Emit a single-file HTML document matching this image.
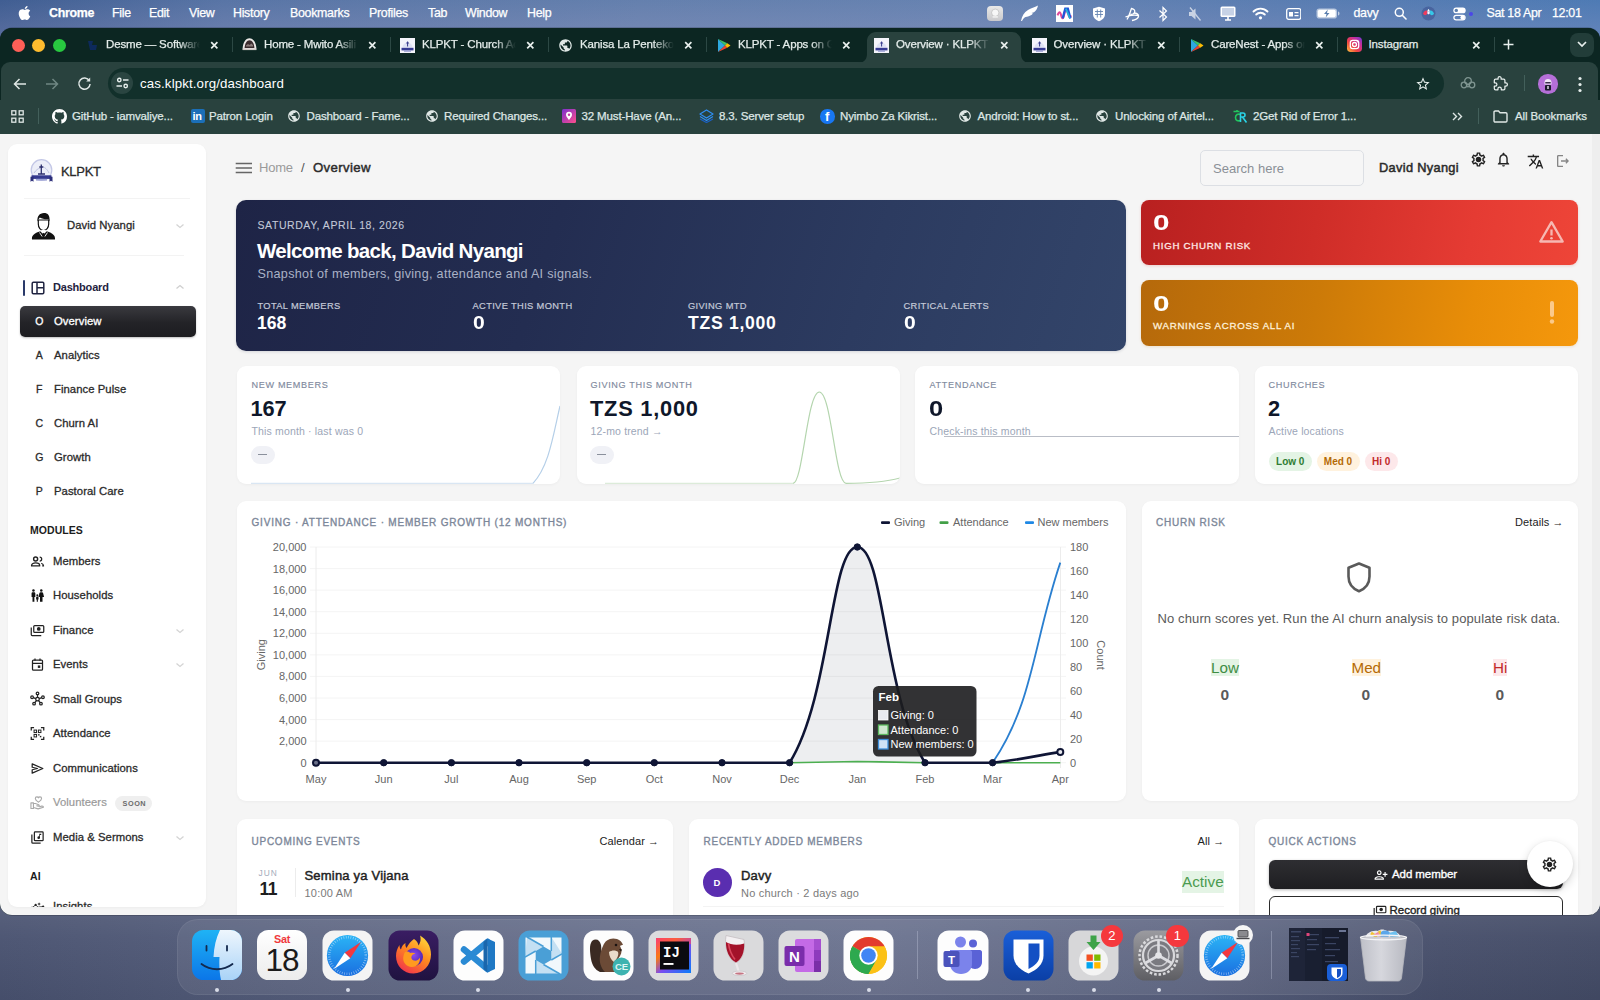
<!DOCTYPE html>
<html lang="en">
<head>
<meta charset="utf-8">
<title>Overview · KLPKT</title>
<style>
*{box-sizing:border-box;margin:0;padding:0}
html,body{width:1600px;height:1000px;overflow:hidden}
body{font-family:"Liberation Sans",sans-serif;background:#474f6b;position:relative;color:#222;-webkit-font-smoothing:antialiased}
.abs{position:absolute}
.t{position:absolute;white-space:nowrap;line-height:1}
/* desktop */
#desk{position:absolute;left:0;top:0;width:1600px;height:1000px;background:linear-gradient(90deg,#495270 0%,#545d7b 18%,#5f6785 40%,#626a88 55%,#575f7d 75%,#474f6b 90%,#434b66 100%)}
#menubar{position:absolute;left:0;top:0;width:1600px;height:42px;background:linear-gradient(90deg,#3d5b8e 0%,#5a76a5 14%,#6883ae 40%,#6a86b2 60%,#5c80b3 80%,#4e7db6 100%)}
#menubar:after{content:"";position:absolute;left:0;top:0;right:0;bottom:0;background:linear-gradient(180deg,rgba(80,110,170,.15) 0%,rgba(150,150,195,.35) 100%)}
#menubar .t{color:#fff;font-size:12.4px;top:7px;z-index:2;letter-spacing:-.3px;-webkit-text-stroke:.25px #fff}
/* chrome window */
#win{position:absolute;left:.4px;top:27.5px;width:1599.2px;height:887px;border-radius:12px;overflow:hidden;background:#0c2622;box-shadow:0 0 0 .5px rgba(0,0,0,.35)}
#g{position:absolute;left:-.4px;top:-27.5px;width:1600px;height:1000px}
#tabstrip{position:absolute;left:0;top:27px;width:1600px;height:35px;background:#0c2622}
#toolbar{position:absolute;left:1px;top:62px;width:1596.5px;height:39px;background:#29423e;border-radius:9px 9px 0 0}
#bmbar{position:absolute;left:0;top:100px;width:1600px;height:34.5px;background:#29423e}
#page{position:absolute;left:0;top:134px;width:1600px;height:781px;background:#f5f5f5;overflow:hidden}
#pg{position:absolute;left:0;top:-134px;width:1600px;height:1000px}
.tabt{position:absolute;top:11.5px;font-size:11.5px;color:#e4ecea;white-space:nowrap;line-height:13px;height:14px;overflow:hidden;letter-spacing:-.15px;-webkit-text-stroke:.25px #e4ecea}
.tabx{position:absolute;top:12px;width:10px;height:10px}
.tsep{position:absolute;top:11px;width:1px;height:14px;background:#2c4844}
.bmt{position:absolute;top:9.5px;font-size:11.5px;color:#dfe7e5;white-space:nowrap;line-height:1;letter-spacing:-.13px;-webkit-text-stroke:.25px #dfe7e5}
/* dock */
#dock{position:absolute;left:177px;top:918.5px;width:1246px;height:76px;border-radius:21px;background:rgba(255,255,255,.07);border:1px solid rgba(255,255,255,.07)}
.di{position:absolute;top:931px;width:51px;height:51px;border-radius:12px;overflow:hidden}
.dot{position:absolute;top:988px;width:4px;height:4px;border-radius:2px;background:#d8dce8}
</style>
</head>
<body>
<div id="desk"></div>
<div class="abs" style="left:0;top:905px;width:1600px;height:95px;background:linear-gradient(180deg,rgba(255,255,255,.09) 0%,rgba(255,255,255,.03) 35%,rgba(0,0,0,.05) 100%)"></div>
<div id="menubar">
<svg class="abs" style="left:17px;top:5px;z-index:2" width="14" height="16" viewBox="0 0 14 16"><path fill="#fff" d="M11.6 8.5c0-1.9 1.5-2.8 1.6-2.8-.9-1.300-2.200-1.500-2.700-1.500-1.100-.1-2.200.7-2.800.7-.6 0-1.500-.7-2.400-.6C4 4.300 2.900 5 2.300 6 1 8.200 2 11.400 3.200 13.200c.6.900 1.300 1.800 2.200 1.800.9 0 1.200-.6 2.300-.6 1.100 0 1.400.6 2.300.6 1 0 1.600-.9 2.200-1.700.7-1 1-2 1-2-.1-.1-1.600-.7-1.600-2.800zM9.800 3.100c.5-.6.800-1.400.7-2.200-.7 0-1.500.5-2 1.100-.4.500-.8 1.300-.7 2.100.8 0 1.500-.4 2-1z"/></svg>
<span class="t" style="left:49px;font-weight:bold">Chrome</span>
<span class="t" style="left:112px">File</span>
<span class="t" style="left:149px">Edit</span>
<span class="t" style="left:189px">View</span>
<span class="t" style="left:233px">History</span>
<span class="t" style="left:290px">Bookmarks</span>
<span class="t" style="left:369px">Profiles</span>
<span class="t" style="left:428px">Tab</span>
<span class="t" style="left:465px">Window</span>
<span class="t" style="left:527px">Help</span>
<!--MENURIGHT-START-->
<div class="abs" style="left:987px;top:5.500px;width:15.500px;height:15.500px;border-radius:4px;background:linear-gradient(180deg,#e9e9e9,#c9c9cc);z-index:2"></div>
<svg class="abs" style="left:989.500px;top:8px;z-index:2" width="10.500" height="10.500" viewBox="0 0 10 10"><circle cx="5" cy="4.500" r="3.500" fill="#f7f7f7" stroke="#b5b5b5" stroke-width=".6"/><path d="M2.500 8.500h5" stroke="#f7f7f7" stroke-width="1.200"/></svg>
<svg class="abs" style="left:1020px;top:5px;z-index:2" width="19" height="17" viewBox="0 0 19 17"><path d="M1 16C2 11 4 7.500 8 5c3-1.800 6.500-2.800 10-4.500-.5 3-2 5.300-4 6.800l-2.500.7 1.500.6c-1.500 1.700-3.500 2.800-6 3.200-2 .3-3.500 1-5 4.200z" fill="#fff"/></svg>
<div class="abs" style="left:1056px;top:5px;width:16.500px;height:16.500px;background:#fff;z-index:2"></div>
<svg class="abs" style="left:1056px;top:5px;z-index:2" width="16.500" height="16.500" viewBox="0 0 16 16"><path d="M1.500 10c1.500-4 2.500-4 3.500 0s2 4 3-1 2-6 3.500-1 2 5 3 2" fill="none" stroke="#e0489a" stroke-width="2"/><path d="M6.500 13L9 3.500l2.500 0L14 13" fill="none" stroke="#2255d8" stroke-width="2.200"/><path d="M9.500 3.500c1.500 3 2.500 6 4 9.500" stroke="#1fb6d9" stroke-width="1.600" fill="none"/></svg>
<svg class="abs" style="left:1091.500px;top:5.500px;z-index:2" width="14" height="16" viewBox="0 0 14 16"><path d="M7 .8l6 1.700v5.500c0 3.500-2.500 6-6 7.200C3.500 14 1 11.500 1 8V2.500z" fill="#fff"/><path d="M3 5.500h8M3 8.500h8M5.300 3.500v8M8.700 3.500v8" stroke="#6786b2" stroke-width=".9"/></svg>
<svg class="abs" style="left:1124px;top:5.500px;z-index:2" width="17" height="16" viewBox="0 0 17 16"><g fill="none" stroke="#fff" stroke-width="1.300"><path d="M3 13.500c2-3 3-7 4.500-11 2.500.5 4 2 3 4s-3.500 2-5 1.500"/><path d="M1.500 11c3-1.500 8-2.500 13.500-1.500M10 7c3 0 5 1.500 4.500 3.500S11 14 8 14.500"/></g></svg>
<svg class="abs" style="left:1158px;top:5.500px;z-index:2" width="10" height="16" viewBox="0 0 10 16"><path d="M1.500 4.500l7 6.500L5 14.500V1.500L8.500 5l-7 6.500" fill="none" stroke="#fff" stroke-width="1.200"/></svg>
<svg class="abs" style="left:1187px;top:5.500px;z-index:2" width="16" height="16" viewBox="0 0 16 16"><path d="M2 6h2.500L8.500 2.500v11L4.500 10H2z" fill="#c9d3e4"/><path d="M3 1.500l10.500 13" stroke="#c9d3e4" stroke-width="1.300"/></svg>
<svg class="abs" style="left:1219.500px;top:6px;z-index:2" width="16" height="15" viewBox="0 0 16 15"><rect x=".5" y=".5" width="15" height="10.500" rx="1.500" fill="#fff"/><rect x="2" y="2" width="12" height="7.500" fill="#c7d2e6"/><path d="M5 14h6M8 11v3" stroke="#fff" stroke-width="1.600"/></svg>
<svg class="abs" style="left:1251.500px;top:6.500px;z-index:2" width="17" height="13" viewBox="0 0 17 13"><g fill="none" stroke="#fff" stroke-width="1.900" stroke-linecap="round"><path d="M1.500 4.500a10 10 0 0 1 14 0"/><path d="M4.200 7.500a6 6 0 0 1 8.600 0"/></g><circle cx="8.500" cy="10.800" r="1.600" fill="#fff"/></svg>
<svg class="abs" style="left:1285.500px;top:7.500px;z-index:2" width="15.500" height="12" viewBox="0 0 15.500 12"><rect x=".7" y=".7" width="14.100" height="10.600" rx="2" fill="none" stroke="#fff" stroke-width="1.300"/><rect x="3" y="4" width="4" height="4.500" fill="#fff"/><path d="M8.500 4.700h4M8.500 7.700h4" stroke="#fff" stroke-width="1.200"/></svg>
<svg class="abs" style="left:1315.500px;top:8px;z-index:2" width="24" height="11" viewBox="0 0 24 11"><rect x=".5" y=".5" width="20.500" height="10" rx="2.800" fill="#fff" fill-opacity=".55"/><rect x="1.800" y="1.800" width="17.900" height="7.400" rx="1.700" fill="#fff"/><path d="M22 3.500c1 .3 1.500 1 1.500 2s-.5 1.700-1.500 2z" fill="#fff" fill-opacity=".6"/><path d="M11.800 1.500L8 6h2.500l-.8 3.500L13.500 5H11z" fill="#5b7fae"/></svg>
<span class="t" style="left:1353.500px">davy</span>
<svg class="abs" style="left:1394px;top:6.500px;z-index:2" width="13" height="13" viewBox="0 0 13 13"><circle cx="5.300" cy="5.300" r="4" fill="none" stroke="#fff" stroke-width="1.500"/><path d="M8.300 8.300l3.700 3.700" stroke="#fff" stroke-width="1.600" stroke-linecap="round"/></svg>
<svg class="abs" style="left:1420.500px;top:6px;z-index:2" width="15" height="15" viewBox="0 0 15 15"><defs><radialGradient id="si" cx=".5" cy=".5" r=".5"><stop offset="0" stop-color="#fff"/><stop offset=".35" stop-color="#f7f2ff"/><stop offset="1" stop-color="#4f66b0" stop-opacity=".2"/></radialGradient></defs><circle cx="7.500" cy="7.500" r="7" fill="#3b4f8c" fill-opacity=".55"/><path d="M2 7.500C3.500 4 6 3.500 7.500 6 6 9 3.500 10.500 2 7.500z" fill="#ef3b5d"/><path d="M13 7.500C11.500 4 9 3.500 7.500 6 9 9 11.500 10.500 13 7.500z" fill="#35c8e8"/><path d="M7.500 3c1.500 1 1.500 3.500 0 5.500-1.500-2-1.500-4.500 0-5.500z" fill="#fff"/><circle cx="7.500" cy="7" r="2" fill="url(#si)"/></svg>
<svg class="abs" style="left:1453px;top:6.500px;z-index:2" width="13" height="14" viewBox="0 0 13 14"><rect x=".3" y=".5" width="12.400" height="5.800" rx="2.900" fill="#fff"/><circle cx="3.300" cy="3.400" r="1.700" fill="#5b7fae"/><rect x=".9" y="8.300" width="11.200" height="4.600" rx="2.300" fill="none" stroke="#fff" stroke-width="1.200"/><circle cx="9.600" cy="10.600" r="2.200" fill="#fff"/></svg>
<div class="abs" style="left:1469px;top:11.500px;width:4px;height:4px;border-radius:50%;background:#4b46e8;z-index:2"></div>
<span class="t" style="left:1486.500px">Sat 18 Apr</span>
<span class="t" style="left:1552px">12:01</span>
<!--MENURIGHT-END-->
</div>
<div id="win"><div id="g">
<div id="tabstrip">
<!--TABS-->
</div>
<div id="toolbar">
<!--TOOLBAR-->
</div>
<div id="bmbar">
<!--BOOKMARKS-->
</div>
<!--CHROME-START-->
<!-- traffic lights -->
<div class="abs" style="left:11.500px;top:38.500px;width:13px;height:13px;border-radius:50%;background:#fe5f57"></div>
<div class="abs" style="left:32px;top:38.500px;width:13px;height:13px;border-radius:50%;background:#febc2e"></div>
<div class="abs" style="left:52.500px;top:38.500px;width:13px;height:13px;border-radius:50%;background:#28c840"></div>
<!-- active tab -->
<svg class="abs" style="left:858px;top:32px" width="172" height="31" viewBox="0 0 172 31"><path d="M0 31c5 0 9-3 9-9V9c0-5 4-9 9-9h136c5 0 9 4 9 9v13c0 6 4 9 9 9z" fill="#29423e"/></svg>

<svg class="abs" style="left:86px;top:37.5px" width="15" height="15" viewBox="0 0 15 15"><path d="M2 3h5l-1 4h5l-1 5H4z" fill="#0d2a5c"/></svg>
<span class="tabt" style="left:106px;top:37.500px;width:94px;-webkit-mask-image:linear-gradient(90deg,#000 78%,transparent 100%);mask-image:linear-gradient(90deg,#000 78%,transparent 100%);">Desme — Software</span>
<svg class="abs" style="left:210.0px;top:40.500px" width="9" height="9" viewBox="0 0 9 9"><path d="M1.200 1.200l6.200 6.200M7.400 1.200l-6.200 6.200" stroke="#e8efed" stroke-width="1.700"/></svg>
<div class="tsep" style="left:232px;top:37px;height:15px"></div>
<svg class="abs" style="left:242px;top:36.500px" width="15" height="15" viewBox="0 0 15 15"><path d="M.6 12.500C.6 6 3.500 1.200 7.500 1.200S14.400 6 14.400 12.500z" fill="#ece8e6"/><path d="M2.600 11C2.800 6.500 4.800 3.200 7.500 3.200S12.200 6.500 12.400 11z" fill="#3a2a2c"/><path d="M4 8.500l2-1.500 1.500 1 2-1.500 1.500 1.800v1.200H4z" fill="#8a7a78"/><rect x=".6" y="11.500" width="13.800" height="1.600" fill="#cfc8c5"/></svg>
<span class="tabt" style="left:264px;top:37.500px;width:94px;-webkit-mask-image:linear-gradient(90deg,#000 78%,transparent 100%);mask-image:linear-gradient(90deg,#000 78%,transparent 100%);">Home - Mwito Asili</span>
<svg class="abs" style="left:368.0px;top:40.500px" width="9" height="9" viewBox="0 0 9 9"><path d="M1.200 1.200l6.200 6.200M7.400 1.200l-6.200 6.200" stroke="#e8efed" stroke-width="1.700"/></svg>
<div class="tsep" style="left:390px;top:37px;height:15px"></div>
<svg class="abs" style="left:400px;top:37.5px" width="15" height="15" viewBox="0 0 15 15"><rect width="15" height="15" fill="#f4f4fb"/><path d="M2.500 9.500a5 5 0 0 1 10 0z" fill="#dfe2f4"/><path d="M7.600 3.500v5M6.300 5h2.600" stroke="#34388a" stroke-width="1"/><rect x="1.500" y="9.800" width="12" height="2.600" fill="#373b94"/><rect x="4" y="12.400" width="7" height="1.300" fill="#8f95cf"/></svg>
<span class="tabt" style="left:422px;top:37.500px;width:94px;-webkit-mask-image:linear-gradient(90deg,#000 78%,transparent 100%);mask-image:linear-gradient(90deg,#000 78%,transparent 100%);">KLPKT - Church Ac</span>
<svg class="abs" style="left:526.0px;top:40.500px" width="9" height="9" viewBox="0 0 9 9"><path d="M1.200 1.200l6.200 6.200M7.400 1.200l-6.200 6.200" stroke="#e8efed" stroke-width="1.700"/></svg>
<div class="tsep" style="left:548px;top:37px;height:15px"></div>
<svg class="abs" style="left:558px;top:37.5px" width="15" height="15" viewBox="0 0 24 24"><path fill="#dfe7e5" d="M12 2C6.480 2 2 6.480 2 12s4.480 10 10 10 10-4.480 10-10S17.520 2 12 2zm-1 17.930c-3.950-.49-7-3.850-7-7.930 0-.62.080-1.210.21-1.790L9 15v1c0 1.100.9 2 2 2v1.930zm6.900-2.540c-.26-.81-1-1.390-1.900-1.390h-1v-3c0-.55-.45-1-1-1H8v-2h2c.55 0 1-.45 1-1V7h2c1.100 0 2-.9 2-2v-.41c2.930 1.190 5 4.060 5 7.410 0 2.080-.8 3.970-2.100 5.390z"/></svg>
<span class="tabt" style="left:580px;top:37.500px;width:94px;-webkit-mask-image:linear-gradient(90deg,#000 78%,transparent 100%);mask-image:linear-gradient(90deg,#000 78%,transparent 100%);">Kanisa La Pentekoste</span>
<svg class="abs" style="left:684.0px;top:40.500px" width="9" height="9" viewBox="0 0 9 9"><path d="M1.200 1.200l6.200 6.200M7.400 1.200l-6.200 6.200" stroke="#e8efed" stroke-width="1.700"/></svg>
<div class="tsep" style="left:706px;top:37px;height:15px"></div>
<svg class="abs" style="left:717px;top:37.5px" width="14" height="15" viewBox="0 0 14 15"><path d="M1 1l7 6.500L1 14z" fill="#2da8e0"/><path d="M1 1l9.300 4.300L8 7.500z" fill="#3bbf6b"/><path d="M1 14l9.300-4.300L8 7.500z" fill="#ea4335"/><path d="M10.300 5.300L13.500 7.500l-3.200 2.200L8 7.500z" fill="#fbbc04"/></svg>
<span class="tabt" style="left:738px;top:37.500px;width:94px;-webkit-mask-image:linear-gradient(90deg,#000 78%,transparent 100%);mask-image:linear-gradient(90deg,#000 78%,transparent 100%);">KLPKT - Apps on G</span>
<svg class="abs" style="left:842.0px;top:40.500px" width="9" height="9" viewBox="0 0 9 9"><path d="M1.200 1.200l6.200 6.200M7.400 1.200l-6.200 6.200" stroke="#e8efed" stroke-width="1.700"/></svg>
<svg class="abs" style="left:874px;top:37.5px" width="15" height="15" viewBox="0 0 15 15"><rect width="15" height="15" fill="#f4f4fb"/><path d="M2.500 9.500a5 5 0 0 1 10 0z" fill="#dfe2f4"/><path d="M7.600 3.500v5M6.300 5h2.600" stroke="#34388a" stroke-width="1"/><rect x="1.500" y="9.800" width="12" height="2.600" fill="#373b94"/><rect x="4" y="12.400" width="7" height="1.300" fill="#8f95cf"/></svg>
<span class="tabt" style="left:896px;top:37.500px;width:94px;-webkit-mask-image:linear-gradient(90deg,#000 78%,transparent 100%);mask-image:linear-gradient(90deg,#000 78%,transparent 100%);">Overview · KLPKT</span>
<svg class="abs" style="left:999.5px;top:40.500px" width="9" height="9" viewBox="0 0 9 9"><path d="M1.200 1.200l6.200 6.200M7.400 1.200l-6.200 6.200" stroke="#e8efed" stroke-width="1.700"/></svg>
<svg class="abs" style="left:1031.5px;top:37.5px" width="15" height="15" viewBox="0 0 15 15"><rect width="15" height="15" fill="#f4f4fb"/><path d="M2.500 9.500a5 5 0 0 1 10 0z" fill="#dfe2f4"/><path d="M7.600 3.500v5M6.300 5h2.600" stroke="#34388a" stroke-width="1"/><rect x="1.500" y="9.800" width="12" height="2.600" fill="#373b94"/><rect x="4" y="12.400" width="7" height="1.300" fill="#8f95cf"/></svg>
<span class="tabt" style="left:1053.5px;top:37.500px;width:94px;-webkit-mask-image:linear-gradient(90deg,#000 78%,transparent 100%);mask-image:linear-gradient(90deg,#000 78%,transparent 100%);">Overview · KLPKT</span>
<svg class="abs" style="left:1157.0px;top:40.500px" width="9" height="9" viewBox="0 0 9 9"><path d="M1.200 1.200l6.200 6.200M7.400 1.200l-6.200 6.200" stroke="#e8efed" stroke-width="1.700"/></svg>
<div class="tsep" style="left:1179px;top:37px;height:15px"></div>
<svg class="abs" style="left:1190px;top:37.5px" width="14" height="15" viewBox="0 0 14 15"><path d="M1 1l7 6.500L1 14z" fill="#2da8e0"/><path d="M1 1l9.300 4.300L8 7.500z" fill="#3bbf6b"/><path d="M1 14l9.300-4.300L8 7.500z" fill="#ea4335"/><path d="M10.300 5.300L13.500 7.500l-3.200 2.200L8 7.500z" fill="#fbbc04"/></svg>
<span class="tabt" style="left:1211px;top:37.500px;width:94px;-webkit-mask-image:linear-gradient(90deg,#000 78%,transparent 100%);mask-image:linear-gradient(90deg,#000 78%,transparent 100%);">CareNest - Apps on</span>
<svg class="abs" style="left:1314.5px;top:40.500px" width="9" height="9" viewBox="0 0 9 9"><path d="M1.200 1.200l6.200 6.200M7.400 1.200l-6.200 6.200" stroke="#e8efed" stroke-width="1.700"/></svg>
<div class="tsep" style="left:1336.5px;top:37px;height:15px"></div>
<svg class="abs" style="left:1347.0px;top:37.0px" width="15" height="15" viewBox="0 0 15 15"><defs><linearGradient id="ig" x1="0" y1="1" x2="1" y2="0"><stop offset="0" stop-color="#fdc740"/><stop offset=".35" stop-color="#f0463f"/><stop offset=".7" stop-color="#c52d9b"/><stop offset="1" stop-color="#6a3bd6"/></linearGradient></defs><rect width="15" height="15" rx="3.800" fill="url(#ig)"/><rect x="3.300" y="3.300" width="8.400" height="8.400" rx="2.400" fill="none" stroke="#fff" stroke-width="1.300"/><circle cx="7.500" cy="7.500" r="2" fill="none" stroke="#fff" stroke-width="1.300"/><circle cx="10.300" cy="4.700" r=".7" fill="#fff"/></svg>
<span class="tabt" style="left:1368.5px;top:37.500px;width:60px;">Instagram</span>
<svg class="abs" style="left:1471.5px;top:40.500px" width="9" height="9" viewBox="0 0 9 9"><path d="M1.200 1.200l6.200 6.200M7.400 1.200l-6.200 6.200" stroke="#e8efed" stroke-width="1.700"/></svg>
<div class="tsep" style="left:1493.5px;top:37px;height:15px"></div>
<svg class="abs" style="left:1503px;top:39px" width="11" height="11" viewBox="0 0 11 11"><path d="M5.500 .5v10M.5 5.500h10" stroke="#e8efed" stroke-width="1.500"/></svg>
<div class="abs" style="left:1570px;top:33px;width:24px;height:24px;border-radius:8px;background:#223d39"></div><svg class="abs" style="left:1577px;top:41px" width="10" height="7" viewBox="0 0 10 7"><path d="M1 1l4 4 4-4" fill="none" stroke="#e8efed" stroke-width="1.700"/></svg>
<!-- toolbar -->
<svg class="abs" style="left:13px;top:76.500px" width="14" height="14" viewBox="0 0 14 14"><path d="M13 7H2M6.500 2L1.500 7l5 5" fill="none" stroke="#dfe7e5" stroke-width="1.500"/></svg>
<svg class="abs" style="left:45px;top:76.500px" width="14" height="14" viewBox="0 0 14 14"><path d="M1 7h11M7.500 2l5 5-5 5" fill="none" stroke="#6f8783" stroke-width="1.500"/></svg>
<svg class="abs" style="left:77px;top:76px" width="15" height="15" viewBox="0 0 15 15"><path d="M12.300 4.700A5.600 5.600 0 1 0 13.100 8" fill="none" stroke="#dfe7e5" stroke-width="1.500"/><path d="M13.200 1.500v4h-4z" fill="#dfe7e5"/></svg>
<div class="abs" style="left:108px;top:67.500px;width:1336px;height:31px;border-radius:15.500px;background:#12302b"></div>
<div class="abs" style="left:111px;top:72px;width:22px;height:22px;border-radius:50%;background:#2a4541"></div>
<svg class="abs" style="left:115.500px;top:77px" width="13" height="12" viewBox="0 0 13 12"><g fill="none" stroke="#e6eeec" stroke-width="1.400"><circle cx="3.300" cy="3" r="1.700"/><path d="M7 3h5.500"/><circle cx="9.700" cy="9" r="1.700"/><path d="M.5 9H6"/></g></svg>
<span class="t" style="left:140px;top:76.500px;font-size:13.300px;color:#fff;letter-spacing:.12px">cas.klpkt.org/dashboard</span>
<svg class="abs" style="left:1415px;top:75.500px" width="16" height="16" viewBox="0 0 24 24"><path fill="#e6eeec" d="M22 9.240l-7.190-.62L12 2 9.190 8.630 2 9.240l5.460 4.730L5.820 21 12 17.270 18.180 21l-1.630-7.030L22 9.240zM12 15.400l-3.760 2.270 1-4.280-3.320-2.880 4.380-.38L12 6.100l1.710 4.040 4.380.38-3.320 2.880 1 4.280L12 15.400z"/></svg>
<svg class="abs" style="left:1459.500px;top:76px" width="16" height="14" viewBox="0 0 16 14"><g fill="none" stroke="#7f9591" stroke-width="1.300"><circle cx="8" cy="5" r="3.300"/><circle cx="4" cy="9" r="2.800"/><circle cx="12" cy="9" r="2.800"/><circle cx="8" cy="9.500" r="1.400"/></g></svg>
<svg class="abs" style="left:1491.500px;top:75px" width="17" height="17" viewBox="0 0 24 24"><path fill="none" stroke="#e6eeec" stroke-width="2" stroke-linejoin="round" d="M20.500 11H19V7a2 2 0 0 0-2-2h-4V3.500a2.500 2.500 0 0 0-5 0V5H4a2 2 0 0 0-2 2v3.800h1.500a2.700 2.700 0 0 1 0 5.400H2V20a2 2 0 0 0 2 2h3.800v-1.500a2.700 2.700 0 0 1 5.400 0V22H17a2 2 0 0 0 2-2v-4h1.500a2.500 2.500 0 0 0 0-5z" transform="translate(1.500 1.500) scale(.88)"/></svg>
<div class="abs" style="left:1523.500px;top:75px;width:1px;height:16px;background:#43605b"></div>
<div class="abs" style="left:1538px;top:74px;width:19.500px;height:19.500px;border-radius:50%;background:#b56fd8"></div>
<svg class="abs" style="left:1542px;top:77.500px" width="12" height="13" viewBox="0 0 12 13"><path d="M2.500 4.500C2.500 2 4 1 6 1s3.500 1 3.500 3.500v2h-7z" fill="#efe4f5"/><rect x="3" y="7" width="6" height="5.500" rx="1" fill="#1c1b2a"/><rect x="5.300" y="8" width="1.400" height="3" fill="#e9e2ef"/><rect x="3.300" y="4" width="5.400" height="1.500" fill="#3a2c4a"/></svg>
<svg class="abs" style="left:1578px;top:75.500px" width="4" height="17" viewBox="0 0 4 17"><circle cx="2" cy="2.500" r="1.600" fill="#e6eeec"/><circle cx="2" cy="8.500" r="1.600" fill="#e6eeec"/><circle cx="2" cy="14.500" r="1.600" fill="#e6eeec"/></svg>
<!-- bookmarks -->
<svg class="abs" style="left:11px;top:110px" width="13" height="13" viewBox="0 0 13 13"><g fill="none" stroke="#dfe7e5" stroke-width="1.300"><rect x=".8" y=".8" width="4" height="4"/><rect x="8.200" y=".8" width="4" height="4"/><rect x=".8" y="8.200" width="4" height="4"/><rect x="8.200" y="8.200" width="4" height="4"/></g></svg>
<div class="abs" style="left:38px;top:108px;width:1px;height:16px;background:#43605b"></div>
<svg class="abs" style="left:51.500px;top:108.500px" width="15" height="15" viewBox="0 0 16 16"><path fill="#fff" d="M8 0C3.580 0 0 3.580 0 8c0 3.540 2.290 6.530 5.470 7.590.4.070.55-.17.550-.38 0-.19-.01-.82-.01-1.490-2.010.37-2.530-.49-2.690-.94-.09-.23-.48-.94-.82-1.130-.28-.15-.68-.52-.01-.53.630-.01 1.080.58 1.230.82.720 1.210 1.870.87 2.330.66.070-.52.280-.87.510-1.070-1.780-.2-3.640-.89-3.640-3.950 0-.87.310-1.590.82-2.150-.08-.2-.36-1.020.08-2.120 0 0 .67-.21 2.200.82.640-.18 1.320-.27 2-.27s1.360.09 2 .27c1.530-1.040 2.200-.82 2.200-.82.440 1.100.16 1.920.08 2.120.51.560.82 1.270.82 2.150 0 3.070-1.870 3.750-3.650 3.950.29.250.54.730.54 1.480 0 1.070-.01 1.930-.01 2.200 0 .21.150.46.550.38A8.013 8.013 0 0 0 16 8c0-4.420-3.580-8-8-8z"/></svg>
<span class="bmt" style="left:72px;top:110.500px">GitHub - iamvaliye...</span>
<div class="abs" style="left:190.500px;top:109px;width:14px;height:14px;border-radius:2px;background:#1b6fb8"></div><span class="t" style="left:192.500px;top:110.500px;font-size:11px;font-weight:bold;color:#fff;letter-spacing:-.3px">in</span>
<span class="bmt" style="left:209px;top:110.500px">Patron Login</span>
<svg class="abs" style="left:287px;top:109px" width="14" height="14" viewBox="0 0 24 24"><path fill="#dfe7e5" d="M12 2C6.480 2 2 6.480 2 12s4.480 10 10 10 10-4.480 10-10S17.520 2 12 2zm-1 17.930c-3.950-.49-7-3.850-7-7.930 0-.62.080-1.210.21-1.790L9 15v1c0 1.100.9 2 2 2v1.930zm6.900-2.540c-.26-.81-1-1.390-1.900-1.390h-1v-3c0-.55-.45-1-1-1H8v-2h2c.55 0 1-.45 1-1V7h2c1.100 0 2-.9 2-2v-.41c2.930 1.190 5 4.060 5 7.410 0 2.080-.8 3.970-2.100 5.390z"/></svg>
<span class="bmt" style="left:306.500px;top:110.500px">Dashboard - Fame...</span>
<svg class="abs" style="left:424.5px;top:109px" width="14" height="14" viewBox="0 0 24 24"><path fill="#dfe7e5" d="M12 2C6.480 2 2 6.480 2 12s4.480 10 10 10 10-4.480 10-10S17.520 2 12 2zm-1 17.930c-3.950-.49-7-3.850-7-7.930 0-.62.080-1.210.21-1.790L9 15v1c0 1.100.9 2 2 2v1.930zm6.900-2.540c-.26-.81-1-1.390-1.900-1.390h-1v-3c0-.55-.45-1-1-1H8v-2h2c.55 0 1-.45 1-1V7h2c1.100 0 2-.9 2-2v-.41c2.930 1.190 5 4.060 5 7.410 0 2.080-.8 3.970-2.100 5.390z"/></svg>
<span class="bmt" style="left:444px;top:110.500px">Required Changes...</span>
<svg class="abs" style="left:562px;top:109px" width="14" height="14" viewBox="0 0 14 14"><defs><linearGradient id="pg1" x1="0" y1="0" x2="1" y2="1"><stop offset="0" stop-color="#7a2fd0"/><stop offset="1" stop-color="#ff4f8b"/></linearGradient></defs><rect width="14" height="14" rx="1.500" fill="url(#pg1)"/><path d="M7 2.800a3 3 0 0 1 3 3c0 2-3 5.200-3 5.200S4 7.800 4 5.800a3 3 0 0 1 3-3z" fill="#fff"/><circle cx="7" cy="5.800" r="1.200" fill="#c23aa8"/></svg>
<span class="bmt" style="left:581.500px;top:110.500px">32 Must-Have (An...</span>
<svg class="abs" style="left:698.500px;top:109px" width="15" height="14" viewBox="0 0 15 14"><g fill="none" stroke="#2f8df0" stroke-width="1.300" stroke-linejoin="round"><path d="M7.500 1L14 5 7.500 9 1 5z"/><path d="M1 7.500l6.500 4 6.500-4"/><path d="M1 10l6.500 3.500L14 10" stroke="#1a5fc0"/></g></svg>
<span class="bmt" style="left:719px;top:110.500px">8.3. Server setup</span>
<div class="abs" style="left:820px;top:109px;width:14.500px;height:14.500px;border-radius:50%;background:#1877f2"></div><span class="t" style="left:825px;top:110px;font-size:13px;font-weight:bold;color:#fff">f</span>
<span class="bmt" style="left:840px;top:110.500px">Nyimbo Za Kikrist...</span>
<svg class="abs" style="left:958px;top:109px" width="14" height="14" viewBox="0 0 24 24"><path fill="#dfe7e5" d="M12 2C6.480 2 2 6.480 2 12s4.480 10 10 10 10-4.480 10-10S17.520 2 12 2zm-1 17.930c-3.950-.49-7-3.850-7-7.930 0-.62.080-1.210.21-1.790L9 15v1c0 1.100.9 2 2 2v1.930zm6.900-2.540c-.26-.81-1-1.390-1.900-1.390h-1v-3c0-.55-.45-1-1-1H8v-2h2c.55 0 1-.45 1-1V7h2c1.100 0 2-.9 2-2v-.41c2.930 1.190 5 4.060 5 7.410 0 2.080-.8 3.970-2.100 5.390z"/></svg>
<span class="bmt" style="left:977.500px;top:110.500px">Android: How to st...</span>
<svg class="abs" style="left:1095px;top:109px" width="14" height="14" viewBox="0 0 24 24"><path fill="#dfe7e5" d="M12 2C6.480 2 2 6.480 2 12s4.480 10 10 10 10-4.480 10-10S17.520 2 12 2zm-1 17.930c-3.950-.49-7-3.850-7-7.930 0-.62.080-1.210.21-1.790L9 15v1c0 1.100.9 2 2 2v1.930zm6.900-2.540c-.26-.81-1-1.390-1.900-1.390h-1v-3c0-.55-.45-1-1-1H8v-2h2c.55 0 1-.45 1-1V7h2c1.100 0 2-.9 2-2v-.41c2.930 1.190 5 4.060 5 7.410 0 2.080-.8 3.970-2.100 5.390z"/></svg>
<span class="bmt" style="left:1115px;top:110.500px">Unlocking of Airtel...</span>
<svg class="abs" style="left:1232px;top:108.500px" width="16" height="15" viewBox="0 0 16 15"><path d="M1.500 2.500h6M5 1v2M8.500 5.500c-2.500-1-5 0-5 3s2.500 4 5 3" fill="none" stroke="#22c55e" stroke-width="1.600"/><path d="M8.500 4h2.500a2 2 0 0 1 0 4H8.500zM8.500 8v5M10.500 8l4 5.500" fill="none" stroke="#2bd3e6" stroke-width="1.600"/></svg>
<span class="bmt" style="left:1253px;top:110.500px">2Get Rid of Error 1...</span>
<svg class="abs" style="left:1452px;top:111.500px" width="11" height="9" viewBox="0 0 11 9"><path d="M1 1l3.500 3.500L1 8M6 1l3.500 3.500L6 8" fill="none" stroke="#dfe7e5" stroke-width="1.400"/></svg>
<div class="abs" style="left:1478px;top:108px;width:1px;height:16px;background:#43605b"></div>
<svg class="abs" style="left:1493px;top:109.500px" width="15" height="13" viewBox="0 0 15 13"><path d="M1 2.200c0-.7.500-1.200 1.200-1.200h3.300l1.500 1.700h5.800c.7 0 1.200.5 1.200 1.200v6.900c0 .7-.5 1.200-1.200 1.200H2.200c-.7 0-1.200-.5-1.200-1.200z" fill="none" stroke="#dfe7e5" stroke-width="1.400"/></svg>
<span class="bmt" style="left:1515px;top:110.500px">All Bookmarks</span>
<!--CHROME-END-->
<div id="page">
<div id="pg">
<div class="abs" style="left:1591.500px;top:134px;width:9px;height:790px;background:#eeeeee"></div>
<!--SIDEBAR-START-->
<style>
.card{position:absolute;background:#fff;border-radius:9px;box-shadow:0 1px 3px rgba(0,0,0,.04)}
.nav{position:absolute;left:53px;font-size:11.3px;color:#2b2b2b;white-space:nowrap;line-height:14px;height:14px;letter-spacing:.05px;-webkit-text-stroke:.3px #2b2b2b}
.sub{position:absolute;left:54px;font-size:11.3px;color:#2b2b2b;white-space:nowrap;line-height:14px;height:14px;letter-spacing:.05px;-webkit-text-stroke:.3px #2b2b2b}
.subl{position:absolute;left:32.3px;width:14px;text-align:center;font-size:10.5px;color:#2b2b2b;line-height:14px;height:14px;-webkit-text-stroke:.3px #2b2b2b}
.ico{position:absolute;left:30px;width:15px;height:15px}
.chev{position:absolute;left:175px;width:10px;height:10px}
.sect{position:absolute;left:30px;font-size:10.500px;font-weight:bold;color:#1c1c1c;letter-spacing:.05px;line-height:14px;height:14px}
</style>
<div class="card" style="left:8px;top:143.5px;width:198px;height:763.5px;overflow:hidden">
<div style="position:absolute;left:-8px;top:-143.5px;width:220px;height:1000px">
<!-- logo -->
<svg class="abs" style="left:29px;top:158px" width="25" height="26" viewBox="0 0 25 26"><circle cx="12.500" cy="12" r="10.300" fill="#eceef8" stroke="#c3c7e6" stroke-width="1.200"/><path d="M5 15c2-3 4-4.500 6.500-5M14 9c2 .5 4 2 6 6" stroke="#b9bede" stroke-width=".9" fill="none"/><path d="M12.300 6.500v9.500M10.300 9h4M9 16h7" stroke="#2d2f6e" stroke-width="1.300" fill="none"/><rect x="2.500" y="17.300" width="20" height="3.600" fill="#35398f"/><path d="M1.500 18.800h3v5l-1.500-1-1.500 1zM20.500 18.800h3v5l-1.500-1-1.500 1z" fill="#2c2f7a"/><rect x="7" y="20.900" width="11" height="1.700" fill="#9da3d4"/></svg>
<span class="t" style="left:61px;top:164.500px;font-size:13px;color:#2b2b2b;letter-spacing:-.3px;-webkit-text-stroke:.3px #2b2b2b">KLPKT</span>
<div class="abs" style="left:24px;top:198px;width:166px;height:1px;background:#f3f3f3"></div>
<!-- avatar -->
<svg class="abs" style="left:31px;top:211.500px" width="25" height="28" viewBox="0 0 25 28"><path d="M7.300 12c0 3.700 2.300 6.500 5.200 6.500s5.200-2.800 5.200-6.500V8H7.300z" fill="#fff" stroke="#111" stroke-width="1.200"/><path d="M6.600 9.500C5.800 4.500 8.500 1 13 1c3.800 0 6.300 2.500 5.400 8.500l-1-2.300c-3 .3-6-.2-8.600-1.700-.9 1-1.600 2.300-2.200 4z" fill="#111"/><path d="M1 27.500c-.5-4 2-6.300 8.300-8.300l3.200 2.800 3.200-2.800c6.300 2 8.800 4.300 8.300 8.300z" fill="#111"/><path d="M9.600 19.300l2.900 3.200 2.900-3.200-1-1.300h-3.800z" fill="#fff"/><path d="M11.200 22l1.300 4.500 1.300-4.500-1.300-1.300z" fill="#111"/><path d="M8.500 20.500l2.600 4M16.500 20.500l-2.600 4" stroke="#fff" stroke-width=".9"/></svg>
<span class="t" style="left:67px;top:219.500px;font-size:11.300px;color:#2b2b2b;letter-spacing:.05px;-webkit-text-stroke:.3px #2b2b2b">David Nyangi</span>
<svg class="abs" style="left:175px;top:221px" width="10" height="10" viewBox="0 0 10 10"><path d="M1.500 3.500l3.500 3 3.500-3" fill="none" stroke="#d4d4d4" stroke-width="1.300"/></svg>
<div class="abs" style="left:24px;top:255px;width:160px;height:1px;background:#f3f3f3"></div>
<!-- dashboard -->
<div class="abs" style="left:22.500px;top:279.500px;width:2.500px;height:16px;background:#2a3a6a;border-radius:1px"></div>
<svg class="abs" style="left:31px;top:280.500px" width="14" height="14" viewBox="0 0 14 14"><rect x="1.200" y="1.200" width="11.600" height="11.600" rx="1.200" fill="none" stroke="#1f2340" stroke-width="1.500"/><path d="M6 1.200v11.600M6 6.800h6.800" stroke="#1f2340" stroke-width="1.500"/></svg>
<span class="t" style="left:53px;top:281.500px;font-size:11px;font-weight:bold;color:#1f2340;letter-spacing:-.2px">Dashboard</span>
<svg class="abs" style="left:175px;top:282px" width="10" height="10" viewBox="0 0 10 10"><path d="M1.500 6.500l3.500-3 3.500 3" fill="none" stroke="#cfcfcf" stroke-width="1.300"/></svg>
<!-- overview pill -->
<div class="abs" style="left:19.500px;top:306px;width:176px;height:31px;border-radius:5px;background:linear-gradient(180deg,#3a3a3f 0%,#232327 55%,#1d1d20 100%);box-shadow:0 1px 2px rgba(0,0,0,.25)"></div>
<span class="subl" style="top:313.50px;color:#fff;-webkit-text-stroke:.3px #fff">O</span><span class="sub" style="top:313.50px;color:#fff;-webkit-text-stroke:.3px #fff">Overview</span>
<span class="subl" style="top:347.50px">A</span><span class="sub" style="top:347.50px">Analytics</span>
<span class="subl" style="top:381.50px">F</span><span class="sub" style="top:381.50px">Finance Pulse</span>
<span class="subl" style="top:415.50px">C</span><span class="sub" style="top:415.50px">Churn AI</span>
<span class="subl" style="top:449.50px">G</span><span class="sub" style="top:449.50px">Growth</span>
<span class="subl" style="top:483.50px">P</span><span class="sub" style="top:483.50px">Pastoral Care</span>
<span class="sect" style="top:522.500px">MODULES</span>
<!-- Members -->
<svg class="ico" style="top:553.500px" viewBox="0 0 24 24"><circle cx="9" cy="8" r="3.200" fill="none" stroke="#222" stroke-width="2.300"/><path d="M2.500 18.500c0-3 3.500-4.300 6.500-4.300s6.500 1.300 6.500 4.300v.5h-13z" fill="none" stroke="#222" stroke-width="2" stroke-linejoin="round"/><path d="M15.500 4.800a3.200 3.200 0 0 1 0 6.400M18 14.800c2 .7 3.500 1.900 3.500 3.700v.5h-2" fill="none" stroke="#222" stroke-width="2"/></svg>
<span class="nav" style="top:553.80px">Members</span>
<!-- Households -->
<svg class="ico" style="top:588px" viewBox="0 0 24 24"><circle cx="5.500" cy="4" r="2" fill="#111"/><path d="M2.500 8.500c0-1 .8-1.800 1.800-1.800h2.400c1 0 1.800.8 1.800 1.800v6H7v7.500H4V14.500H2.500z" fill="#111"/><circle cx="18" cy="4" r="2" fill="#111"/><path d="M16.800 6.700h2.400c.8 0 1.500.5 1.700 1.300l1.600 6.500h-2.500v7.500h-4v-7.500h-2.500l1.600-6.500c.2-.8.900-1.300 1.700-1.300z" fill="#111"/><circle cx="11.700" cy="11.500" r="1.600" fill="#111"/><path d="M9.800 15c0-.8.600-1.400 1.400-1.400h1c.8 0 1.400.6 1.400 1.400v3.500h-1V22h-1.800v-3.500h-1z" fill="#111"/></svg>
<span class="nav" style="top:588.30px">Households</span>
<!-- Finance -->
<svg class="ico" style="top:622.500px" viewBox="0 0 24 24"><rect x="6" y="4" width="16" height="11" rx="1.500" fill="none" stroke="#222" stroke-width="2"/><circle cx="14" cy="9.500" r="3" fill="#222"/><path d="M2 7v11.500c0 .8.700 1.500 1.500 1.500H18" fill="none" stroke="#222" stroke-width="2"/></svg>
<span class="nav" style="top:622.80px">Finance</span>
<svg class="chev" style="top:625.500px" viewBox="0 0 10 10"><path d="M1.500 3.500l3.500 3 3.500-3" fill="none" stroke="#d4d4d4" stroke-width="1.300"/></svg>
<!-- Events -->
<svg class="ico" style="top:657px" viewBox="0 0 24 24"><rect x="4" y="5" width="16" height="16" rx="1.500" fill="none" stroke="#222" stroke-width="2"/><path d="M4 10h16M8 2.500V6M16 2.500V6" stroke="#222" stroke-width="2"/><rect x="12.500" y="13.500" width="4" height="4" fill="#222"/></svg>
<span class="nav" style="top:657.30px">Events</span>
<svg class="chev" style="top:660px" viewBox="0 0 10 10"><path d="M1.500 3.500l3.500 3 3.500-3" fill="none" stroke="#d4d4d4" stroke-width="1.300"/></svg>
<!-- Small groups -->
<svg class="ico" style="top:691px" viewBox="0 0 24 24"><g fill="none" stroke="#222" stroke-width="2"><circle cx="12" cy="13" r="2.800"/><circle cx="12" cy="3.800" r="2.100"/><circle cx="3.300" cy="10" r="2.100"/><circle cx="20.700" cy="10" r="2.100"/><circle cx="6.500" cy="20.200" r="2.100"/><circle cx="17.500" cy="20.200" r="2.100"/><path d="M12 6v4.200M5.300 10.700l4 1.400M18.700 10.700l-4 1.400M7.800 18.500l2.500-3.200M16.200 18.500l-2.500-3.200"/></g></svg>
<span class="nav" style="top:691.80px">Small Groups</span>
<!-- Attendance -->
<svg class="ico" style="top:726px" viewBox="0 0 24 24"><g fill="none" stroke="#222" stroke-width="2"><path d="M2 7V2.500h4.500M17.500 2.500H22V7M22 17v4.500h-4.500M6.500 21.500H2V17"/><rect x="6.500" y="6.500" width="4" height="4" stroke-width="1.600"/><rect x="13.500" y="6.500" width="4" height="4" stroke-width="1.600"/><rect x="6.500" y="13.500" width="4" height="4" stroke-width="1.600"/></g><rect x="13" y="13" width="2.300" height="2.300" fill="#222"/><rect x="15.800" y="15.800" width="2.300" height="2.300" fill="#222"/></svg>
<span class="nav" style="top:726.30px">Attendance</span>
<!-- Communications -->
<svg class="ico" style="top:760.500px" viewBox="0 0 24 24"><path d="M3.500 4.500l17 7.500-17 7.500V14l8.500-2-8.500-2z" fill="none" stroke="#222" stroke-width="2" stroke-linejoin="round"/></svg>
<span class="nav" style="top:760.80px">Communications</span>
<!-- Volunteers -->
<svg class="ico" style="top:795px" viewBox="0 0 24 24"><g fill="none" stroke="#a9a9a9" stroke-width="1.800" stroke-linejoin="round"><path d="M16 3c-1.300 0-2.300.9-2.500 1.700C13.300 3.900 12.300 3 11 3 9.500 3 8.500 4.200 8.500 5.600c0 2.400 3.600 4.900 5 5.900 1.400-1 5-3.500 5-5.900C18.500 4.200 17.500 3 16 3z"/><rect x="1.500" y="12.500" width="4" height="9"/><path d="M5.500 13.500h3.300l5.200 2c.8.300 1 1 .8 1.600-.2.600-.9.900-1.500.7l-3-.8M5.500 20l7.500 2.200 8.500-2.700c-.3-1.400-1.500-2-2.800-1.700L15 18.800"/></g></svg>
<span class="nav" style="top:795.30px;color:#9a9a9a;-webkit-text-stroke:.2px #9a9a9a">Volunteers</span>
<div class="abs" style="left:115px;top:796px;width:37px;height:15px;border-radius:7.500px;background:#efefef"></div>
<span class="t" style="left:122.500px;top:800px;font-size:7.300px;font-weight:bold;color:#6b6b6b;letter-spacing:.55px">SOON</span>
<!-- Media -->
<svg class="ico" style="top:829.500px" viewBox="0 0 24 24"><rect x="7" y="3" width="14" height="14" rx="1.200" fill="none" stroke="#222" stroke-width="2"/><path d="M3 7v12.500c0 .8.700 1.500 1.500 1.500H17" fill="none" stroke="#222" stroke-width="2"/><path d="M14.800 6h3.200v2h-2v4.300a2.100 2.100 0 1 1-1.200-1.900z" fill="#222"/></svg>
<span class="nav" style="top:829.80px">Media &amp; Sermons</span>
<svg class="chev" style="top:832.500px" viewBox="0 0 10 10"><path d="M1.500 3.500l3.500 3 3.500-3" fill="none" stroke="#d4d4d4" stroke-width="1.300"/></svg>
<span class="sect" style="top:868.500px">AI</span>
<svg class="ico" style="top:899px" viewBox="0 0 24 24"><g fill="#222"><circle cx="3" cy="14" r="1.800"/><circle cx="9" cy="9.500" r="1.800"/><circle cx="21" cy="12" r="1.800"/><path d="M14.500 5l.9 2 2 .9-2 .9-.9 2-.9-2-2-.9 2-.9z"/></g><path d="M3 14l6-4.500 4 3.500 8-1" fill="none" stroke="#222" stroke-width="1.300"/></svg>
<span class="nav" style="top:899.30px">Insights</span>
</div>
</div>
<!--SIDEBAR-END-->
<!--MAIN1-START-->
<style>
.lbl{position:absolute;white-space:nowrap;line-height:1;font-size:9.100px;letter-spacing:.66px;color:#7f8a9e;-webkit-text-stroke:.15px #7f8a9e}
.sec{position:absolute;white-space:nowrap;line-height:1;font-size:10px;letter-spacing:.75px;color:#7c8799;-webkit-text-stroke:.35px #7c8799;margin-top:1.1px}
.hl{position:absolute;white-space:nowrap;line-height:1;font-size:9.300px;letter-spacing:.36px;color:#c3c9d8;-webkit-text-stroke:.2px #c3c9d8}
.hv{position:absolute;white-space:nowrap;line-height:1;font-size:17.600px;font-weight:bold;color:#fff;letter-spacing:0}
.big{position:absolute;white-space:nowrap;line-height:1;font-size:21.800px;font-weight:bold;color:#0f172a;letter-spacing:-.1px}
.mut{position:absolute;white-space:nowrap;line-height:1;font-size:10.500px;color:#9ca6b8;letter-spacing:.16px}
.pill{position:absolute;height:19px;border-radius:9.500px;font-size:10px;font-weight:bold;line-height:19px;text-align:center;white-space:nowrap}
.lnk{position:absolute;white-space:nowrap;line-height:1;font-size:11px;color:#222;letter-spacing:.1px}
</style>
<!-- header -->
<svg class="abs" style="left:235px;top:161px" width="18" height="14" viewBox="0 0 18 14"><path d="M.7 2.500h16.300M.7 7h16.300M.7 11.500h16.300" stroke="#666" stroke-width="1.700"/></svg>
<span class="t" style="left:259px;top:161px;font-size:13px;color:#9a9a9a;letter-spacing:-.2px">Home</span>
<span class="t" style="left:301px;top:161px;font-size:13.200px;color:#555">/</span>
<span class="t" style="left:313px;top:161px;font-size:13.200px;color:#2b2b2b;letter-spacing:.35px;-webkit-text-stroke:.45px #2b2b2b">Overview</span>
<div class="abs" style="left:1199.500px;top:150px;width:164px;height:35.500px;border:1px solid #dcdfe4;border-radius:5px;background:#f6f6f6"></div>
<span class="t" style="left:1213px;top:161.500px;font-size:13px;color:#8b9096;letter-spacing:.02px">Search here</span>
<span class="t" style="left:1379px;top:161.500px;font-size:12.800px;color:#2b2b2b;letter-spacing:.32px;-webkit-text-stroke:.5px #2b2b2b">David Nyangi</span>
<!-- gear -->
<svg class="abs" style="left:1470px;top:151.300px" width="17" height="17" viewBox="0 0 24 24"><circle cx="12" cy="12" r="3.200" fill="#222"/><path fill="#222" d="M19.430 12.980c.040-.320.070-.640.070-.980s-.030-.660-.070-.980l2.110-1.650c.190-.150.240-.420.120-.640l-2-3.460c-.120-.220-.390-.300-.610-.220l-2.490 1c-.520-.400-1.080-.730-1.690-.980l-.380-2.650C14.460 2.180 14.250 2 14 2h-4c-.250 0-.460.180-.490.420l-.380 2.650c-.610.250-1.170.590-1.690.980l-2.490-1c-.230-.090-.490 0-.610.220l-2 3.460c-.130.220-.070.490.120.640l2.110 1.650c-.040.320-.070.650-.070.980s.030.660.070.980l-2.110 1.650c-.190.150-.240.420-.120.640l2 3.460c.120.220.390.300.610.220l2.490-1c.520.400 1.080.730 1.690.980l.380 2.650c.030.240.240.420.490.420h4c.250 0 .460-.180.490-.420l.380-2.650c.610-.250 1.170-.590 1.690-.980l2.490 1c.230.090.490 0 .610-.220l2-3.460c.120-.220.070-.490-.120-.640l-2.110-1.650zm-1.980-1.710c.040.310.050.520.050.730s-.020.430-.050.730l-.140 1.130.89.700 1.080.840-.700 1.210-1.270-.510-1.040-.420-.900.680c-.430.320-.840.560-1.250.730l-1.060.430-.160 1.130-.200 1.350h-1.400l-.190-1.350-.160-1.130-1.060-.430c-.430-.180-.830-.410-1.230-.710l-.910-.700-1.060.430-1.270.510-.700-1.210 1.080-.840.890-.700-.140-1.130c-.030-.310-.050-.540-.050-.740s.020-.430.050-.730l.140-1.130-.890-.700-1.080-.840.700-1.210 1.270.51 1.040.42.900-.68c.430-.32.840-.56 1.250-.73l1.060-.43.160-1.130.200-1.350h1.390l.190 1.350.16 1.130 1.060.43c.430.180.830.410 1.230.71l.910.700 1.060-.43 1.270-.51.700 1.210-1.070.85-.890.700.14 1.130zM12 8c-2.210 0-4 1.790-4 4s1.790 4 4 4 4-1.790 4-4-1.790-4-4-4zm0 6c-1.100 0-2-.900-2-2s.900-2 2-2 2 .900 2 2-.900 2-2 2z"/></svg>
<!-- bell -->
<svg class="abs" style="left:1495px;top:151.300px" width="17" height="17" viewBox="0 0 24 24"><path fill="#222" d="M12 22c1.100 0 2-.900 2-2h-4c0 1.100.900 2 2 2zm6-6v-5c0-3.070-1.630-5.640-4.500-6.320V4c0-.830-.670-1.500-1.500-1.500s-1.500.670-1.500 1.500v.680C7.640 5.360 6 7.920 6 11v5l-2 2v1h16v-1l-2-2zm-2 1H8v-6c0-2.480 1.510-4.500 4-4.500s4 2.020 4 4.500v6z"/></svg>
<!-- translate -->
<svg class="abs" style="left:1527px;top:152.500px" width="17" height="17" viewBox="0 0 24 24"><path fill="#222" d="M12.870 15.070l-2.540-2.510.03-.03c1.740-1.940 2.980-4.170 3.710-6.530H17V4h-7V2H8v2H1v1.990h11.170C11.500 7.920 10.440 9.750 9 11.350 8.070 10.320 7.300 9.190 6.690 8h-2c.73 1.630 1.730 3.170 2.980 4.560l-5.090 5.020L4 19l5-5 3.110 3.110.76-2.040zM18.500 10h-2L12 22h2l1.120-3h4.750L21 22h2l-4.500-12zm-2.620 7l1.620-4.330L19.120 17h-3.240z"/></svg>
<!-- logout -->
<svg class="abs" style="left:1555px;top:153.200px" width="16" height="16" viewBox="0 0 24 24"><path fill="#858585" d="M17 8l-1.410 1.410L17.170 11H9v2h8.170l-1.580 1.580L17 16l4-4-4-4zM5 5h7V3H5c-1.100 0-2 .900-2 2v14c0 1.100.900 2 2 2h7v-2H5V5z"/></svg>
<!-- hero -->
<div class="abs" style="left:236px;top:199.500px;width:890px;height:151.500px;border-radius:10px;background:linear-gradient(108deg,#1e2446 0%,#232d51 35%,#2c3b60 70%,#33456a 100%);box-shadow:0 1px 3px rgba(20,30,60,.14)"></div>
<span class="hl" style="left:257.500px;top:219.800px;font-size:10.500px;letter-spacing:.58px;-webkit-text-stroke:.1px #c3c9d8">SATURDAY, APRIL 18, 2026</span>
<span class="t" style="left:257px;top:241px;font-size:20.500px;font-weight:bold;color:#fff;letter-spacing:-.67px">Welcome back, David Nyangi</span>
<span class="t" style="left:257.500px;top:267.500px;font-size:12.600px;color:#aab2c6;letter-spacing:.31px">Snapshot of members, giving, attendance and AI signals.</span>
<span class="hl" style="left:257.500px;top:301.500px">TOTAL MEMBERS</span><span class="hv" style="left:257px;top:315px">168</span>
<span class="hl" style="left:472.500px;top:301.500px">ACTIVE THIS MONTH</span><span class="hv" style="left:472.500px;top:315px;transform:scaleX(1.2);transform-origin:0 50%">0</span>
<span class="hl" style="left:688px;top:301.500px">GIVING MTD</span><span class="hv" style="left:688px;top:315px;letter-spacing:.7px">TZS 1,000</span>
<span class="hl" style="left:903.500px;top:301.500px">CRITICAL ALERTS</span><span class="hv" style="left:903.500px;top:315px;transform:scaleX(1.2);transform-origin:0 50%">0</span>
<!-- red card -->
<div class="abs" style="left:1140.500px;top:199.500px;width:437.500px;height:65px;border-radius:8px;background:linear-gradient(100deg,#b82020 0%,#cf2d28 40%,#e53b33 75%,#ee4538 100%);box-shadow:0 1px 3px rgba(190,40,30,.18)"></div>
<span class="t" style="left:1153px;top:212px;font-size:22.500px;font-weight:bold;color:#fff;transform:scaleX(1.32);transform-origin:0 50%">0</span>
<span class="t" style="left:1153px;top:240.500px;font-size:9.700px;letter-spacing:.72px;color:#ffe9e6;-webkit-text-stroke:.3px #ffe9e6">HIGH CHURN RISK</span>
<svg class="abs" style="left:1537.500px;top:219px" width="27" height="25" viewBox="0 0 27 25"><path d="M13.500 3.200L24.700 22.500H2.300z" fill="none" stroke="#f6b8b2" stroke-width="2.300" stroke-linejoin="round"/><path d="M13.500 10.500v6" stroke="#f6b8b2" stroke-width="2.300"/><circle cx="13.500" cy="19.300" r="1.300" fill="#f6b8b2"/></svg>
<!-- orange card -->
<div class="abs" style="left:1140.500px;top:279.500px;width:437.500px;height:66px;border-radius:8px;background:linear-gradient(100deg,#b5690b 0%,#cc7a08 40%,#e88d08 75%,#f5980c 100%);box-shadow:0 1px 3px rgba(200,120,10,.18)"></div>
<span class="t" style="left:1153px;top:292.500px;font-size:22.500px;font-weight:bold;color:#fff;transform:scaleX(1.32);transform-origin:0 50%">0</span>
<span class="t" style="left:1153px;top:320.500px;font-size:9.700px;letter-spacing:.72px;color:#fff0d8;-webkit-text-stroke:.3px #fff0d8">WARNINGS ACROSS ALL AI</span>
<svg class="abs" style="left:1546px;top:300px" width="12" height="26" viewBox="0 0 12 26"><path d="M6 3v12" stroke="#fbc98a" stroke-width="4" stroke-linecap="round"/><circle cx="6" cy="21.500" r="2.200" fill="#fbc98a"/></svg>
<!--MAIN1-END-->
<!--MAIN2-START-->
<!-- stat cards -->
<div class="card" style="left:237px;top:366px;width:323px;height:118px;overflow:hidden">
<svg class="abs" style="left:0;top:0" width="323" height="118" viewBox="0 0 323 118"><path d="M14 117.400H296" fill="none" stroke="#d9e6f3" stroke-width="1.100"/><path d="M296 117.300C312 100 316 70 323 40" fill="none" stroke="#b5cfe8" stroke-width="1.200"/></svg>
</div>
<span class="lbl" style="left:251.500px;top:381.40px">NEW MEMBERS</span>
<span class="big" style="left:250.500px;top:397.500px">167</span>
<span class="mut" style="left:251.500px;top:426px">This month · last was 0</span>
<div class="abs" style="left:251px;top:445.500px;width:24px;height:18.500px;border-radius:9.500px;background:#f0f1f6"></div><div class="abs" style="left:258px;top:454px;width:9px;height:1.300px;background:#8a909c"></div>

<div class="card" style="left:576.500px;top:366px;width:323px;height:118px;overflow:hidden">
<svg class="abs" style="left:0;top:0" width="323" height="118" viewBox="0 0 323 118"><path d="M28 117.400H216" fill="none" stroke="#dcebd9" stroke-width="1.100"/><path d="M216 117.300C226 117.300 230 26 242.300 26C254.500 26 258 117.300 269 117.300C285 117.300 305 117 323 112" fill="none" stroke="#b4d5ae" stroke-width="1.200"/></svg>
</div>
<span class="lbl" style="left:590.500px;top:381.40px">GIVING THIS MONTH</span>
<span class="big" style="left:590px;top:397.500px;letter-spacing:.77px">TZS 1,000</span>
<span class="mut" style="left:590.500px;top:426px">12-mo trend →</span>
<div class="abs" style="left:590px;top:445.500px;width:24px;height:18.500px;border-radius:9.500px;background:#f0f1f6"></div><div class="abs" style="left:597px;top:454px;width:9px;height:1.300px;background:#8a909c"></div>

<div class="card" style="left:915px;top:366px;width:323.500px;height:118px;overflow:hidden"></div>
<span class="lbl" style="left:929.500px;top:381.40px">ATTENDANCE</span>
<span class="big" style="left:929px;top:397.500px;transform:scaleX(1.17);transform-origin:0 50%">0</span>
<span class="mut" style="left:929.500px;top:426px">Check-ins this month</span>
<div class="abs" style="left:943.500px;top:436px;width:295px;height:1.300px;background:#b9bdc6"></div>

<div class="card" style="left:1254.500px;top:366px;width:323px;height:118px"></div>
<span class="lbl" style="left:1268.500px;top:381.40px">CHURCHES</span>
<span class="big" style="left:1268px;top:397.500px">2</span>
<span class="mut" style="left:1268.500px;top:426px">Active locations</span>
<span class="pill" style="left:1268.500px;top:452px;width:43.500px;background:#e4f4e5;color:#2f7d33">Low 0</span>
<span class="pill" style="left:1316.500px;top:452px;width:43px;background:#fff2de;color:#b56a05">Med 0</span>
<span class="pill" style="left:1365px;top:452px;width:32.500px;background:#fde8ea;color:#c22a2a">Hi 0</span>

<!-- chart card -->
<div class="card" style="left:237px;top:500.500px;width:889px;height:300.500px"></div>
<span class="sec" style="left:251.500px;top:516.70px;letter-spacing:.8px">GIVING · ATTENDANCE · MEMBER GROWTH (12 MONTHS)</span>
<svg class="abs" style="left:237px;top:500px" width="889" height="301" viewBox="237 500 889 301" font-family="Liberation Sans, sans-serif" font-size="11" fill="#666">
<g stroke="#f4f4f4" stroke-width="1">
<path d="M310 547H1066M310 568.600H1066M310 590.100H1066M310 611.700H1066M310 633.300H1066M310 654.900H1066M310 676.400H1066M310 698H1066M310 719.600H1066M310 741.100H1066M310 762.700H1066"/>
<path d="M316 547V768M1060.500 547V768" stroke="#ececec"/>
</g>
<g text-anchor="end">
<text x="306.500" y="551">20,000</text><text x="306.500" y="572.600">18,000</text><text x="306.500" y="594.100">16,000</text><text x="306.500" y="615.700">14,000</text><text x="306.500" y="637.300">12,000</text><text x="306.500" y="658.900">10,000</text><text x="306.500" y="680.400">8,000</text><text x="306.500" y="702">6,000</text><text x="306.500" y="723.600">4,000</text><text x="306.500" y="745.100">2,000</text><text x="306.500" y="766.700">0</text>
</g>
<g text-anchor="start">
<text x="1070" y="551">180</text><text x="1070" y="575">160</text><text x="1070" y="598.900">140</text><text x="1070" y="622.900">120</text><text x="1070" y="646.900">100</text><text x="1070" y="670.800">80</text><text x="1070" y="694.800">60</text><text x="1070" y="718.800">40</text><text x="1070" y="742.700">20</text><text x="1070" y="766.700">0</text>
</g>
<g text-anchor="middle">
<text x="316" y="783">May</text><text x="383.700" y="783">Jun</text><text x="451.400" y="783">Jul</text><text x="519" y="783">Aug</text><text x="586.700" y="783">Sep</text><text x="654.300" y="783">Oct</text><text x="722" y="783">Nov</text><text x="789.600" y="783">Dec</text><text x="857.300" y="783">Jan</text><text x="925" y="783">Feb</text><text x="992.600" y="783">Mar</text><text x="1060.300" y="783">Apr</text>
</g>
<text transform="translate(264.500 654.700) rotate(-90)" text-anchor="middle">Giving</text>
<text transform="translate(1096.500 655) rotate(90)" text-anchor="middle">Count</text>
<!-- legend -->
<rect x="881" y="521.300" width="9" height="2.600" rx="1" fill="#0f1535"/><text x="894" y="526.300">Giving</text>
<rect x="939.500" y="521.300" width="9" height="2.600" rx="1" fill="#43a047"/><text x="953" y="526.300">Attendance</text>
<rect x="1025" y="521.300" width="9" height="2.600" rx="1" fill="#1e88e5"/><text x="1037.500" y="526.300">New members</text>
<!-- series -->
<path d="M316 762.700H789.600C831.200 696.300 830.200 547 857.300 547C884.400 547 883.400 696.300 925 762.700H992.600Z" fill="rgba(15,21,53,.075)"/>
<path d="M789.600 762.700C820 762 840 761.700 857.300 761.500C880 761.700 900 762.300 925 762.700H1060.300" fill="none" stroke="#4caf50" stroke-width="1.600"/>
<path d="M992.600 762.700C1033.600 702.100 1033.200 642.600 1060.300 562.600" fill="none" stroke="#2a7fd0" stroke-width="1.800"/>
<path d="M316 762.700H789.600C831.200 696.300 830.200 547 857.300 547C884.400 547 883.400 696.300 925 762.700H992.600C1020 760 1040 755 1060.300 751.900" fill="none" stroke="#0f1535" stroke-width="2.600" stroke-linejoin="round"/>
<g fill="#0f1535" stroke="#0f1535" stroke-width="1"><circle cx="383.700" cy="762.700" r="3.200"/><circle cx="451.400" cy="762.700" r="3.200"/><circle cx="519" cy="762.700" r="3.200"/><circle cx="586.700" cy="762.700" r="3.200"/><circle cx="654.300" cy="762.700" r="3.200"/><circle cx="722" cy="762.700" r="3.200"/><circle cx="789.600" cy="762.700" r="3.200"/><circle cx="857.300" cy="547" r="3.200"/><circle cx="925" cy="762.700" r="3.200"/><circle cx="992.600" cy="762.700" r="3.200"/></g>
<circle cx="316" cy="762.700" r="3" fill="#6b7088" stroke="#0f1535" stroke-width="2"/>
<circle cx="1060.300" cy="751.900" r="3" fill="#e8e9ee" stroke="#0f1535" stroke-width="2"/>
<!-- tooltip -->
<rect x="873" y="686" width="103.500" height="70.500" rx="5.500" fill="rgba(28,28,30,.9)"/>
<text x="878.500" y="701" fill="#fff" font-weight="bold" font-size="11.500">Feb</text>
<rect x="878.500" y="710.500" width="9.500" height="9.500" fill="#e9eaef" stroke="#fff" stroke-width=".8"/><text x="890.500" y="719.300" fill="#fff" font-size="11">Giving: 0</text>
<rect x="878.500" y="725" width="9.500" height="9.500" fill="#cfe7d0" stroke="#5cb85f" stroke-width="1.300"/><text x="890.500" y="733.800" fill="#fff" font-size="11">Attendance: 0</text>
<rect x="878.500" y="739.500" width="9.500" height="9.500" fill="#cfe3f6" stroke="#3d8fdc" stroke-width="1.300"/><text x="890.500" y="748.300" fill="#fff" font-size="11">New members: 0</text>
</svg>

<!-- churn card -->
<div class="card" style="left:1142px;top:500.500px;width:435.500px;height:300.500px"></div>
<span class="sec" style="left:1156px;top:516.70px">CHURN RISK</span>
<span class="lnk" style="left:1515px;top:517px">Details →</span>
<svg class="abs" style="left:1345px;top:561px" width="28" height="33" viewBox="0 0 28 33"><path d="M14 2.500L3.500 6.800v8.700c0 6.800 4.400 12.200 10.500 14.800 6.100-2.600 10.500-8 10.500-14.800V6.800z" fill="none" stroke="#5a5a5a" stroke-width="2.600" stroke-linejoin="round"/></svg>
<span class="t" style="left:1157.500px;top:612px;font-size:13px;color:#5a5a5a;letter-spacing:.12px">No churn scores yet. Run the AI churn analysis to populate risk data.</span>
<span class="t" style="left:1211px;top:658.500px;font-size:15.200px;line-height:17px;color:#3f8d44;background:#e4f4e5">Low</span>
<span class="t" style="left:1351.500px;top:658.500px;font-size:15.200px;line-height:17px;color:#b56a05;background:#fff2de">Med</span>
<span class="t" style="left:1493px;top:658.500px;font-size:15.200px;line-height:17px;color:#c22a2a;background:#fde8ea">Hi</span>
<span class="t" style="left:1220.500px;top:687px;font-size:15.500px;font-weight:bold;color:#5a5a5a">0</span>
<span class="t" style="left:1361.500px;top:687px;font-size:15.500px;font-weight:bold;color:#5a5a5a">0</span>
<span class="t" style="left:1495.500px;top:687px;font-size:15.500px;font-weight:bold;color:#5a5a5a">0</span>

<!-- upcoming events -->
<div class="card" style="left:237px;top:819px;width:435.500px;height:120px"></div>
<span class="sec" style="left:251.500px;top:835.50px">UPCOMING EVENTS</span>
<span class="lnk" style="left:599.500px;top:835.500px">Calendar →</span>
<span class="t" style="left:258.500px;top:869px;font-size:8.400px;letter-spacing:1px;color:#a4acbb">JUN</span>
<span class="t" style="left:259.500px;top:880.500px;font-size:17.500px;font-weight:bold;color:#1e1e1e;letter-spacing:-.6px">11</span>
<div class="abs" style="left:295px;top:867.500px;width:1px;height:29px;background:#ececec"></div>
<span class="t" style="left:304.500px;top:869px;font-size:13px;color:#222;letter-spacing:.2px;-webkit-text-stroke:.45px #222">Semina ya Vijana</span>
<span class="t" style="left:304.500px;top:887.500px;font-size:11px;color:#7a7a7a;letter-spacing:.2px">10:00 AM</span>

<!-- recently added -->
<div class="card" style="left:689px;top:819px;width:549.500px;height:120px"></div>
<span class="sec" style="left:703.500px;top:835.50px">RECENTLY ADDED MEMBERS</span>
<span class="lnk" style="left:1197.500px;top:835.500px">All →</span>
<div class="abs" style="left:703px;top:867.500px;width:29px;height:29px;border-radius:50%;background:#5a2eb0"></div>
<span class="t" style="left:713.500px;top:877.500px;font-size:9.500px;font-weight:bold;color:#fff">D</span>
<span class="t" style="left:741px;top:869px;font-size:13px;color:#222;letter-spacing:.2px;-webkit-text-stroke:.45px #222">Davy</span>
<span class="t" style="left:741px;top:887.500px;font-size:11px;color:#7a7a7a;letter-spacing:.2px">No church · 2 days ago</span>
<span class="t" style="left:1182px;top:870.500px;font-size:15.300px;line-height:22px;color:#4b9b50;background:#e4f4e5">Active</span>
<div class="abs" style="left:703px;top:906px;width:521px;height:1px;background:#f3f3f3"></div>

<!-- quick actions -->
<div class="card" style="left:1254.500px;top:819px;width:323px;height:120px"></div>
<span class="sec" style="left:1268.500px;top:835.50px">QUICK ACTIONS</span>
<div class="abs" style="left:1268.500px;top:860px;width:294px;height:28.500px;border-radius:6px;background:linear-gradient(180deg,#2e2e32 0%,#1e1e21 100%);box-shadow:0 1px 3px rgba(0,0,0,.3)"></div>
<svg class="abs" style="left:1374px;top:867.500px" width="14" height="14" viewBox="0 0 24 24"><path fill="#fff" d="M15 12c2.210 0 4-1.790 4-4s-1.790-4-4-4-4 1.790-4 4 1.790 4 4 4zm0-6c1.100 0 2 .900 2 2s-.900 2-2 2-2-.900-2-2 .900-2 2-2zm0 8c-2.670 0-8 1.340-8 4v2h16v-2c0-2.660-5.330-4-8-4zm-6 4c.220-.720 3.310-2 6-2 2.700 0 5.800 1.290 6 2H9zm-3-3v-3h3v-2H6V7H4v3H1v2h3v3z" transform="translate(24 0) scale(-1 1)"/></svg>
<span class="t" style="left:1392px;top:868.500px;font-size:11.500px;color:#fff;letter-spacing:-.08px;-webkit-text-stroke:.35px #fff">Add member</span>
<div class="abs" style="left:1268.500px;top:896px;width:294px;height:28.500px;border-radius:6px;border:1.200px solid #2b2b2b;background:#fff"></div>
<svg class="abs" style="left:1373px;top:904px" width="14" height="14" viewBox="0 0 24 24"><rect x="6" y="4" width="16" height="11" rx="1.500" fill="none" stroke="#222" stroke-width="2"/><circle cx="14" cy="9.500" r="3" fill="#222"/><path d="M2 7v11.500c0 .8.700 1.500 1.500 1.500H18" fill="none" stroke="#222" stroke-width="2"/></svg>
<span class="t" style="left:1389.500px;top:905px;font-size:11.500px;color:#222;letter-spacing:0;-webkit-text-stroke:.35px #222">Record giving</span>
<!-- floating gear -->
<div class="abs" style="left:1526.500px;top:841px;width:46px;height:46px;border-radius:50%;background:#fff;box-shadow:0 3px 10px rgba(0,0,0,.16),0 1px 3px rgba(0,0,0,.08)"></div>
<svg class="abs" style="left:1541px;top:855.500px" width="17" height="17" viewBox="0 0 24 24"><circle cx="12" cy="12" r="3.200" fill="#222"/><path fill="#222" d="M19.430 12.980c.040-.320.070-.640.070-.980s-.030-.660-.070-.980l2.110-1.650c.190-.150.240-.420.120-.640l-2-3.460c-.120-.220-.390-.300-.610-.220l-2.490 1c-.520-.400-1.080-.730-1.690-.980l-.380-2.650C14.460 2.180 14.250 2 14 2h-4c-.250 0-.460.180-.490.420l-.380 2.650c-.610.250-1.170.590-1.690.980l-2.490-1c-.230-.090-.490 0-.610.220l-2 3.460c-.130.220-.070.490.120.640l2.110 1.650c-.040.320-.070.650-.070.980s.030.660.070.980l-2.110 1.650c-.190.150-.240.420-.120.640l2 3.460c.120.220.390.300.610.220l2.490-1c.520.400 1.080.730 1.690.980l.380 2.650c.030.240.240.420.490.420h4c.250 0 .460-.180.490-.420l.380-2.650c.610-.250 1.170-.590 1.690-.980l2.490 1c.230.090.490 0 .610-.220l2-3.460c.120-.220.070-.490-.120-.640l-2.110-1.650zm-1.980-1.710c.040.310.050.520.050.730s-.020.430-.050.730l-.140 1.130.89.700 1.080.840-.700 1.210-1.270-.510-1.040-.420-.900.680c-.430.320-.840.560-1.250.730l-1.060.430-.160 1.130-.200 1.350h-1.400l-.190-1.350-.160-1.130-1.060-.430c-.430-.180-.830-.410-1.230-.710l-.910-.700-1.060.430-1.270.510-.700-1.210 1.080-.840.890-.700-.140-1.130c-.030-.310-.050-.540-.050-.740s.020-.430.050-.730l.140-1.130-.890-.700-1.080-.840.700-1.210 1.270.51 1.040.42.900-.68c.430-.32.840-.56 1.250-.73l1.060-.43.160-1.130.200-1.350h1.390l.190 1.350.16 1.130 1.060.43c.430.180.830.410 1.230.71l.910.700 1.060-.43 1.270-.51.700 1.210-1.070.85-.890.700.14 1.130zM12 8c-2.210 0-4 1.790-4 4s1.790 4 4 4 4-1.790 4-4-1.790-4-4-4zm0 6c-1.100 0-2-.900-2-2s.900-2 2-2 2 .900 2 2-.900 2-2 2z"/></svg>
<!--MAIN2-END-->
<!--PAGE-->
</div>
</div>
</div></div>
<div id="dock"></div>
<!--DOCK-START-->
<!-- Finder -->
<svg class="abs" style="left:191px;top:929.3px" width="52" height="52" viewBox="0 0 52 52"><defs><linearGradient id="fd1" x1="0" y1="0" x2="0" y2="1"><stop offset="0" stop-color="#1fb3f5"/><stop offset="1" stop-color="#0b76e8"/></linearGradient><linearGradient id="fd2" x1="0" y1="0" x2="0" y2="1"><stop offset="0" stop-color="#eef6fd"/><stop offset="1" stop-color="#a9d3f7"/></linearGradient><clipPath id="fdc"><rect x="1" y="1" width="50" height="50" rx="11.500"/></clipPath></defs><rect x="1" y="1" width="50" height="50" rx="11.500" fill="url(#fd1)"/><g clip-path="url(#fdc)"><path d="M29 1c-4 8-6 17-6.500 27h6c-.5 8 0 16 1.500 23H52V1z" fill="url(#fd2)"/></g><path d="M15.500 17v4.500M36 17v4.500" stroke="#14294d" stroke-width="1.800" stroke-linecap="round"/><path d="M10.500 35c9 7 22 7 31 0" fill="none" stroke="#14294d" stroke-width="1.800" stroke-linecap="round"/><path d="M29 1c-4 8-6 17-6.500 27h6c-.5 8 0 16 1.500 23" fill="none" stroke="#14294d" stroke-width="1.300" stroke-opacity=".0"/></svg>
<!-- Calendar -->
<div class="abs" style="left:257px;top:930.3px;width:50px;height:50px;border-radius:11.500px;background:linear-gradient(180deg,#fff,#ececec)"></div>
<span class="t" style="left:257px;top:933.8px;width:50px;text-align:center;font-size:10.800px;color:#f0383c;font-weight:bold;letter-spacing:-.3px">Sat</span>
<span class="t" style="left:257px;top:945.3px;width:50px;text-align:center;font-size:31.500px;color:#1b1b1b;letter-spacing:-1px">18</span>
<!-- Safari -->
<svg class="abs" style="left:322px;top:929.8px" width="51" height="51" viewBox="0 0 51 51"><defs><linearGradient id="sf1" x1="0" y1="0" x2="0" y2="1"><stop offset="0" stop-color="#2bb4f6"/><stop offset="1" stop-color="#1a6fe0"/></linearGradient></defs><rect x=".5" y=".5" width="50" height="50" rx="11.500" fill="#f4f4f4"/><circle cx="25.500" cy="25.500" r="20.600" fill="url(#sf1)"/><circle cx="25.500" cy="25.500" r="18.300" fill="none" stroke="#fff" stroke-opacity=".5" stroke-width="2.500" stroke-dasharray=".7 1.700"/><path d="M39 12L22.700 22.700 28.300 28.300z" fill="#f2383f"/><path d="M12 39L22.700 22.700 28.300 28.300z" fill="#fff"/></svg>
<!-- Firefox -->
<svg class="abs" style="left:387.500px;top:929.8px" width="51" height="51" viewBox="0 0 51 51"><defs><linearGradient id="ff1" x1="0" y1="0" x2="0" y2="1"><stop offset="0" stop-color="#3a1d63"/><stop offset="1" stop-color="#1f1240"/></linearGradient><linearGradient id="ff2" x1=".8" y1="0" x2=".2" y2="1"><stop offset="0" stop-color="#ffd83a"/><stop offset=".45" stop-color="#ff8a1f"/><stop offset="1" stop-color="#f0304e"/></linearGradient><radialGradient id="ff3" cx=".5" cy=".4" r=".6"><stop offset="0" stop-color="#8a4bf0"/><stop offset="1" stop-color="#4a22a8"/></radialGradient></defs><rect x=".5" y=".5" width="50" height="50" rx="11.500" fill="url(#ff1)"/><path d="M26 9c3 2 4 4 4.500 6.500C33 12 33 8 32 5.500c7 4 11 11 11 19C43 35 35.500 43.500 25.500 43.500S8 36 8 26c0-4 1.300-8 3.500-11 0 2 .5 3.500 1.500 4.500.5-3 2-5 4.500-6.500-.3 2 0 3.500 1 5C20.500 14 23 11 26 9z" fill="url(#ff2)"/><circle cx="26" cy="27" r="9" fill="url(#ff3)"/><path d="M17 22c2-1 4-.5 5.500 1 1.500-.5 3.500-.3 5 .5-2 .3-3.500 1.500-4 3s.5 3.500 2.500 4c2.500.7 5-1 6-3 .5 5-3 9.500-8 9.500-6 0-10-5.500-8.500-11 .3-1.500.8-3 1.500-4z" fill="#ff9a1f"/></svg>
<!-- VS Code -->
<svg class="abs" style="left:452.500px;top:929.8px" width="51" height="51" viewBox="0 0 51 51"><rect x=".5" y=".5" width="50" height="50" rx="11.500" fill="#fdfdfd"/><path d="M34.500 12L11 31.500M34.500 39L11 19.500" stroke="#2a8ad4" stroke-width="6.500" stroke-linecap="round"/><path d="M34.500 8.500l7.500 3.500v27l-7.500 3.500z" fill="#1f78c4"/><path d="M34.500 8.500v34l-4-3.500V12z" fill="#1a66ac"/></svg>
<!-- Aperture blue -->
<svg class="abs" style="left:518px;top:929.8px" width="51" height="51" viewBox="0 0 51 51"><rect x=".5" y=".5" width="50" height="50" rx="11.500" fill="#4a9fd6"/><rect x="7" y="7" width="37" height="37" fill="#f1f8fc"/><path d="M25.5 16.5L9.0 7.0L7.0 27.2z M33.3 30.0L44.0 23.8L33.3 7.0z M17.7 30.0L17.7 44.0L42.0 44.0z" fill="#c4e0f3"/><path d="M25.5 16.5L33.3 21.0L33.3 30.0L25.5 34.5L17.7 30.0L17.7 21.0z" fill="#4a9fd6"/><path d="M25.5 16.5L9.0 7.0 M33.3 21.0L33.3 7.0 M33.3 30.0L44.0 23.8 M25.5 34.5L42.0 44.0 M17.7 30.0L17.7 44.0 M17.7 21.0L7.0 27.2" stroke="#4a9fd6" stroke-width="1.500" fill="none"/><rect x="7" y="7" width="37" height="37" fill="none" stroke="#4a9fd6" stroke-width="1"/></svg>
<!-- DBeaver -->
<svg class="abs" style="left:583px;top:929.8px" width="51" height="51" viewBox="0 0 51 51"><rect x=".5" y=".5" width="50" height="50" rx="11.500" fill="#fdfdfd"/><path d="M9 11c4-3 8-1 9 4 1 6-1 12 1 18 1 4 4 7 8 9H17c-5-2-8-7-9-13-1-7-2-14 1-18z" fill="#3a2a22"/><path d="M20 16c2-6 8-9 14-7 3 1 5 3 6 6-1 0-2 0-3 1 2 3 2 7 0 10l-4 6c-1 4 0 7 2 10H22c-4-4-6-10-5-16 .5-4 1.500-7 3-10z" fill="#6b4a36"/><path d="M26 22c3-2 7-2 9 0 1 3-1 7-4 10-3-2-5-6-5-10z" fill="#e9dccb"/><circle cx="33" cy="15" r="1.300" fill="#1a1210"/><path d="M36 19l3 .5-1 2z" fill="#1a1210"/><circle cx="38.500" cy="36.500" r="9" fill="#3db3b0"/><text x="38.500" y="40" text-anchor="middle" font-family="Liberation Sans, sans-serif" font-size="9.500" font-weight="bold" fill="#dff5f3">CE</text></svg>
<!-- IntelliJ -->
<svg class="abs" style="left:648px;top:929.8px" width="51" height="51" viewBox="0 0 51 51"><defs><linearGradient id="ij1" x1="0" y1="0" x2="1" y2="1"><stop offset="0" stop-color="#fc3a7c"/><stop offset=".3" stop-color="#f97a12"/><stop offset=".55" stop-color="#7b4cf0"/><stop offset="1" stop-color="#087cfa"/></linearGradient></defs><rect x=".5" y=".5" width="50" height="50" rx="11.500" fill="#dcdcde"/><rect x="8" y="8" width="35" height="35" fill="url(#ij1)"/><path d="M8 8h35v6l-29 3z" fill="#fb4a5c" fill-opacity=".6"/><rect x="12" y="11.500" width="29" height="28" fill="#0b0b10"/><text x="15" y="27" font-family="Liberation Mono, monospace" font-size="14" font-weight="bold" fill="#fff">IJ</text><rect x="15.500" y="33" width="10" height="1.900" fill="#fff"/></svg>
<!-- Wine -->
<svg class="abs" style="left:713px;top:929.8px" width="51" height="51" viewBox="0 0 51 51"><rect x=".5" y=".5" width="50" height="50" rx="11.500" fill="#dadadc"/><path d="M13 5.500l18 4c1.500 10-.5 19.500-8 23.500C15.500 30 11 17 13 5.500z" fill="#f3f0f2" stroke="#c4bec2" stroke-width=".8"/><path d="M13 12c5 3 11.500 3.500 18.200 1.500.3 8-2 15.500-8.200 19C16.500 29.500 12.500 20 13 12z" fill="#a3122a"/><path d="M15.500 13.500c.8 6 2.500 11 6.500 16" stroke="#d9455c" stroke-width="1.700" fill="none"/><path d="M23 33l3 9.500" stroke="#ece8ea" stroke-width="2.200"/><ellipse cx="26.500" cy="43.300" rx="7.300" ry="2.200" fill="#f1edef" stroke="#c4bec2" stroke-width=".6"/><ellipse cx="26.500" cy="43.600" rx="4.300" ry="1.100" fill="#a3122a" fill-opacity=".55"/></svg>
<!-- OneNote -->
<svg class="abs" style="left:778px;top:929.8px" width="51" height="51" viewBox="0 0 51 51"><rect x=".5" y=".5" width="50" height="50" rx="11.500" fill="#dcdcde"/><rect x="17" y="9" width="26" height="33" rx="2" fill="#c46ae6"/><rect x="36" y="9" width="7" height="11" fill="#a64fd0"/><rect x="36" y="20" width="7" height="11" fill="#8d3bbd"/><rect x="36" y="31" width="7" height="11" fill="#7a2fa8"/><rect x="6.500" y="16" width="20" height="20" rx="2" fill="#7a2dab"/><text x="16.500" y="31.500" text-anchor="middle" font-family="Liberation Sans, sans-serif" font-size="15" font-weight="bold" fill="#fff">N</text></svg>
<!-- Chrome -->
<svg class="abs" style="left:843px;top:929.8px" width="51" height="51" viewBox="0 0 51 51"><rect x=".5" y=".5" width="50" height="50" rx="11.500" fill="#fdfdfd"/><circle cx="25.500" cy="25.500" r="18.500" fill="#fbc116"/><path d="M25.500 25.500L9.480 16.250A18.500 18.500 0 0 1 41.520 16.250z" fill="#e33b2e"/><path d="M41.520 16.250H25.500L25.500 25.500z" fill="#e33b2e"/><path d="M9.480 16.250A18.500 18.500 0 0 0 25.500 44L33.500 30.100 25.500 25.500z" fill="#2da94f"/><path d="M25.500 44L33.500 30.100 17.500 30.100 9.480 16.250A18.500 18.500 0 0 0 25.500 44z" fill="#2da94f"/><path d="M41.520 16.250H25.500l8 13.850L25.500 44A18.500 18.500 0 0 0 41.520 16.250z" fill="#fbc116"/><circle cx="25.500" cy="25.500" r="9.200" fill="#fff"/><circle cx="25.500" cy="25.500" r="7.300" fill="#4285f4"/></svg>
<div class="abs" style="left:916.500px;top:931.3px;width:1px;height:48px;background:rgba(200,205,225,.35)"></div>
<!-- Teams -->
<svg class="abs" style="left:937px;top:929.8px" width="52" height="51" viewBox="0 0 52 51"><rect x=".5" y=".5" width="51" height="50" rx="11.500" fill="#fdfdfd"/><circle cx="36" cy="13.500" r="4" fill="#5a62d6"/><path d="M31 20h12c1 0 2 1 2 2v10c0 4-3 7-7 7s-7-3-7-7z" fill="#5a62d6"/><circle cx="23.500" cy="12" r="5.500" fill="#7b83eb"/><path d="M13 20h20c1 0 2 1 2 2v12c0 6-5 10-11 10s-11-4-11-10z" fill="#7b83eb"/><rect x="6.500" y="21" width="16" height="16" rx="2" fill="#4b53bc"/><text x="14.500" y="33.500" text-anchor="middle" font-family="Liberation Sans, sans-serif" font-size="11.500" font-weight="bold" fill="#fff">T</text></svg>
<!-- Bitwarden -->
<svg class="abs" style="left:1002.500px;top:929.8px" width="51" height="51" viewBox="0 0 51 51"><defs><linearGradient id="bw1" x1="0" y1="0" x2="0" y2="1"><stop offset="0" stop-color="#1a5fd8"/><stop offset="1" stop-color="#0b3fa6"/></linearGradient></defs><rect x=".5" y=".5" width="50" height="50" rx="11.500" fill="url(#bw1)"/><path d="M10.500 9.500h30v16c0 9-7 14.500-15 18-8-3.500-15-9-15-18z" fill="#fff"/><path d="M25.500 13.500h11v12c0 6.500-5 10.500-11 13.500z" fill="#1450c4"/></svg>
<!-- MS installer -->
<svg class="abs" style="left:1068px;top:929.8px" width="51" height="51" viewBox="0 0 51 51"><rect x=".5" y=".5" width="50" height="50" rx="11.500" fill="#d7d7d9"/><circle cx="25.500" cy="31" r="14.500" fill="#f4f4f4"/><path d="M22.500 5.500h6v6.500h4l-7 8-7-8h4z" fill="#3ea348"/><rect x="18.500" y="24.500" width="6.300" height="6.300" fill="#f25022"/><rect x="26.200" y="24.500" width="6.300" height="6.300" fill="#7fba00"/><rect x="18.500" y="32.200" width="6.300" height="6.300" fill="#00a4ef"/><rect x="26.200" y="32.200" width="6.300" height="6.300" fill="#ffb900"/></svg>
<div class="abs" style="left:1100.500px;top:924.8px;width:22.500px;height:22.500px;border-radius:50%;background:#f5383d"></div><span class="t" style="left:1100.500px;top:929.3px;width:22.500px;text-align:center;font-size:13px;color:#fff">2</span>
<!-- System prefs -->
<svg class="abs" style="left:1133px;top:929.8px" width="51" height="51" viewBox="0 0 51 51"><defs><linearGradient id="sp1" x1="0" y1="0" x2="0" y2="1"><stop offset="0" stop-color="#9b9ba0"/><stop offset="1" stop-color="#5e5e63"/></linearGradient></defs><rect x=".5" y=".5" width="50" height="50" rx="11.500" fill="url(#sp1)"/><circle cx="25.500" cy="25.500" r="19" fill="none" stroke="#d9d9dc" stroke-width="2.500" stroke-dasharray="2.600 1.900"/><circle cx="25.500" cy="25.500" r="15.500" fill="#7a7a80" stroke="#d9d9dc" stroke-width="2.200"/><circle cx="25.500" cy="25.500" r="10.500" fill="none" stroke="#c9c9cd" stroke-width="1.500"/><path d="M25.500 25.500V10.500M25.500 25.500L38.500 33M25.500 25.500L12.500 33" stroke="#dcdce0" stroke-width="2.600"/><circle cx="25.500" cy="25.500" r="3.300" fill="#e4e4e7"/></svg>
<div class="abs" style="left:1166px;top:924.8px;width:22.500px;height:22.500px;border-radius:50%;background:#f5383d"></div><span class="t" style="left:1166px;top:929.3px;width:22.500px;text-align:center;font-size:13px;color:#fff">1</span>
<!-- Safari 2 -->
<svg class="abs" style="left:1198.500px;top:929.8px" width="51" height="51" viewBox="0 0 51 51"><rect x=".5" y=".5" width="50" height="50" rx="11.500" fill="#f4f4f4"/><circle cx="25.500" cy="25.500" r="20.600" fill="url(#sf1)"/><circle cx="25.500" cy="25.500" r="18.300" fill="none" stroke="#fff" stroke-opacity=".5" stroke-width="2.500" stroke-dasharray=".7 1.700"/><path d="M39 12L22.700 22.700 28.300 28.300z" fill="#f2383f"/><path d="M12 39L22.700 22.700 28.300 28.300z" fill="#fff"/></svg>
<div class="abs" style="left:1233px;top:925.3px;width:20px;height:20px;border-radius:50%;background:#f6f6f6"></div><svg class="abs" style="left:1236px;top:930.3px" width="14" height="10" viewBox="0 0 14 10"><rect x="2" y=".5" width="10" height="6.500" rx="1" fill="#8a8a8e" stroke="#4a4a4e" stroke-width=".9"/><path d="M.5 8.500h13" stroke="#4a4a4e" stroke-width="1.400"/></svg>
<div class="abs" style="left:1271px;top:931.3px;width:1px;height:48px;background:rgba(200,205,225,.35)"></div>
<!-- screenshot thumb -->
<svg class="abs" style="left:1288.500px;top:928.3px" width="59" height="53" viewBox="0 0 59 53"><rect width="59" height="53" fill="#161b2b"/><rect x="0" y="0" width="16" height="53" fill="#1e2438"/><rect x="16" y="0" width="17" height="53" fill="#191f31"/><g fill="#3b4563"><rect x="2" y="3" width="10" height="1.500"/><rect x="2" y="8" width="8" height="1.200"/><rect x="2" y="12" width="9" height="1.200"/><rect x="2" y="16" width="7" height="1.200"/><rect x="2" y="20" width="9" height="1.200"/><rect x="2" y="24" width="6" height="1.200"/><rect x="2" y="28" width="8" height="1.200"/><rect x="18" y="6" width="12" height="1.200"/><rect x="18" y="11" width="10" height="1.200"/><rect x="18" y="16" width="12" height="1.200"/><rect x="18" y="21" width="9" height="1.200"/><rect x="36" y="9" width="14" height="1.300"/><rect x="36" y="15" width="11" height="1.200"/><rect x="36" y="21" width="15" height="1.200"/><rect x="36" y="27" width="10" height="1.200"/><rect x="36" y="33" width="13" height="1.200"/></g><rect x="17.500" y="5" width="3" height="3" fill="#e0457b"/><rect x="50" y="2" width="7" height="2" fill="#6b7594"/><rect x="38" y="36" width="20" height="17" rx="4" fill="#1a5fd8"/><path d="M42.500 39.500h11v5.500c0 3.300-2.500 5-5.500 6.300-3-1.300-5.500-3-5.500-6.300z" fill="#fff"/><path d="M48 41h4v4.500c0 2.300-1.800 3.500-4 4.500z" fill="#1450c4"/></svg>
<!-- Trash -->
<svg class="abs" style="left:1359px;top:928.3px" width="49" height="54" viewBox="0 0 49 54"><defs><linearGradient id="tr1" x1="0" y1="0" x2="1" y2="0"><stop offset="0" stop-color="#c9cad0"/><stop offset=".45" stop-color="#e4e4e8"/><stop offset="1" stop-color="#c2c3c9"/></linearGradient></defs><path d="M8 6c3-3 8-4 11-3 2-2 6-2 9 0 4-1 9 0 12 3l2 4H6z" fill="#e9e9ec"/><path d="M12 5l6 4M20 3l4 7" stroke="#f1c232" stroke-width="3"/><path d="M22 4c3-2 7-2 9 1l-2 5h-8z" fill="#5aa6ea"/><path d="M30 5l7-2 3 6-8 2z" fill="#6ec1f0"/><path d="M14 7l5-3 3 5z" fill="#f08aa0"/><path d="M1.500 9h46l-5 41c-.3 2-1.800 3-3.500 3H10c-1.700 0-3.200-1-3.500-3z" fill="url(#tr1)" fill-opacity=".9" stroke="#b9bac0" stroke-width=".8"/><ellipse cx="24.500" cy="9.500" rx="23" ry="2.300" fill="none" stroke="#f6f6f8" stroke-width="1.300"/></svg>
<!-- dots -->
<div class="dot" style="left:215px"></div><div class="dot" style="left:345.500px"></div><div class="dot" style="left:476px"></div><div class="dot" style="left:867px"></div><div class="dot" style="left:1026px"></div><div class="dot" style="left:1091.500px"></div><div class="dot" style="left:1156.500px"></div>
<!--DOCK-END-->
</body>
</html>
